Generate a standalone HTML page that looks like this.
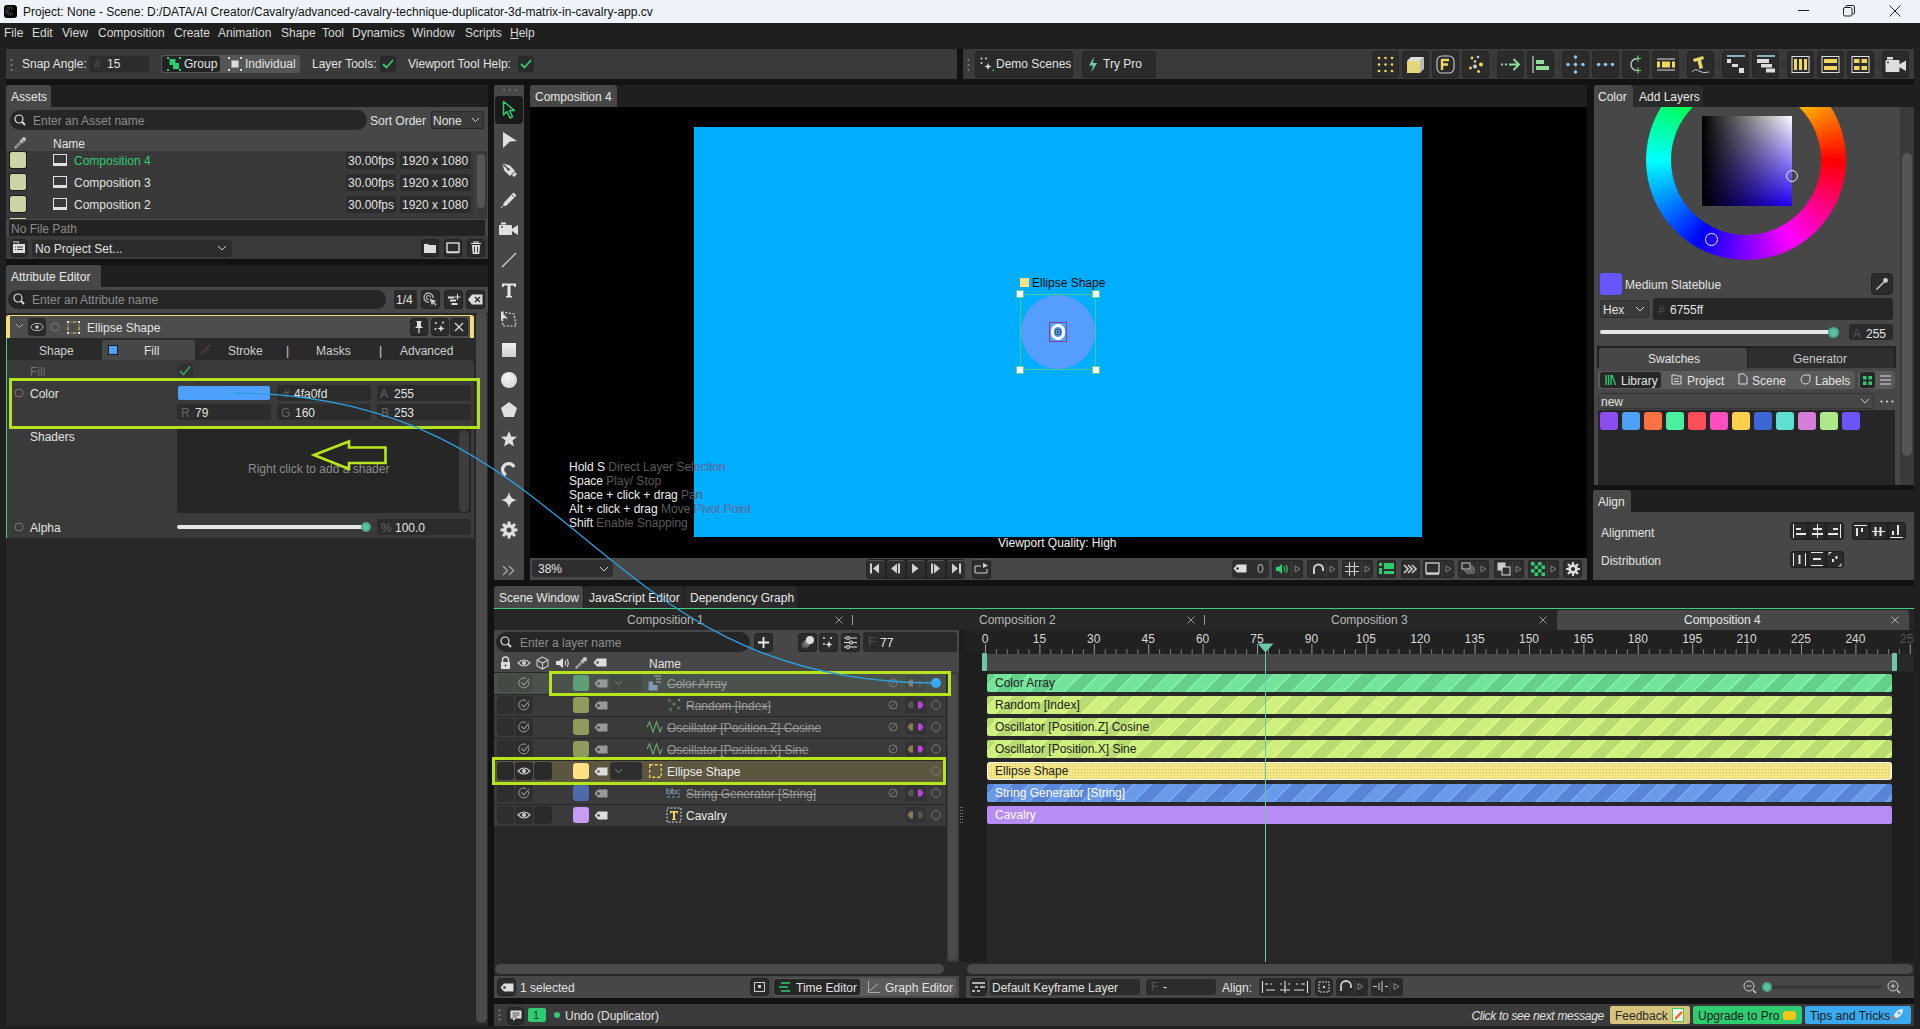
<!DOCTYPE html>
<html><head><meta charset="utf-8">
<style>
*{box-sizing:border-box;margin:0;padding:0}
html,body{width:1920px;height:1029px;overflow:hidden;background:#1f1f1f;font-family:"Liberation Sans",sans-serif;font-size:12px;color:#e2e2e2}
.a{position:absolute}
.t{position:absolute;white-space:nowrap;line-height:16px}
.g{color:#8a8a8a}
.btn{position:absolute;background:#2b2b2b;border-radius:3px;border:1px solid #222}
.inp{position:absolute;background:#262626;border-radius:3px}
svg{position:absolute;overflow:visible}
</style></head><body>

<!-- TITLE BAR -->
<div class="a" style="left:0;top:0;width:1920px;height:23px;background:#eef3f9"></div>
<div class="a" style="left:3.5px;top:4.5px;width:13px;height:13px;background:#000;border-radius:3px"></div>
<svg style="left:5px;top:6px" width="10" height="10" viewBox="0 0 10 10"><path d="M8.2 2.8 A4 4 0 1 0 8.2 7.2" fill="none" stroke="#888" stroke-width="1" stroke-dasharray="1.2 0.8"/><path d="M6.8 3.8 A2.2 2.2 0 1 0 6.8 6.2" fill="none" stroke="#999" stroke-width="1" stroke-dasharray="1 0.8"/></svg>
<div class="t" style="left:23px;top:4px;color:#111">Project: None - Scene: D:/DATA/AI Creator/Cavalry/advanced-cavalry-technique-duplicator-3d-matrix-in-cavalry-app.cv</div>

<!-- MENU BAR -->
<div class="a" style="left:0;top:23px;width:1920px;height:20px;background:#1f1f1f"></div>
<div class="t" style="left:4px;top:25px;color:#d8d8d8">File</div>
<div class="t" style="left:32px;top:25px;color:#d8d8d8">Edit</div>
<div class="t" style="left:62px;top:25px;color:#d8d8d8">View</div>
<div class="t" style="left:98px;top:25px;color:#d8d8d8">Composition</div>
<div class="t" style="left:174px;top:25px;color:#d8d8d8">Create</div>
<div class="t" style="left:218px;top:25px;color:#d8d8d8">Animation</div>
<div class="t" style="left:281px;top:25px;color:#d8d8d8">Shape</div>
<div class="t" style="left:322px;top:25px;color:#d8d8d8">Tool</div>
<div class="t" style="left:352px;top:25px;color:#d8d8d8">Dynamics</div>
<div class="t" style="left:412px;top:25px;color:#d8d8d8">Window</div>
<div class="t" style="left:465px;top:25px;color:#d8d8d8">Scripts</div>
<div class="t" style="left:510px;top:25px;color:#d8d8d8"><u>H</u>elp</div>

<div class="a" style="left:1798px;top:10px;width:11px;height:1px;background:#222"></div>
<svg style="left:1843px;top:5px" width="12" height="12" viewBox="0 0 12 12"><rect x="0.5" y="2.5" width="8.5" height="8.5" rx="1.5" fill="none" stroke="#222" stroke-width="1"/><path d="M3 2.5 V1.5 Q3 0.5 4 0.5 H10 Q11.5 0.5 11.5 2 V8 Q11.5 9 10.5 9 H9" fill="none" stroke="#222" stroke-width="1"/></svg>
<svg style="left:1889px;top:5px" width="12" height="12" viewBox="0 0 12 12"><path d="M0.5 0.5 L11.5 11.5 M11.5 0.5 L0.5 11.5" stroke="#222" stroke-width="1"/></svg>


<div class="a" style="left:6px;top:79px;width:1908px;height:947px;background:#121212"></div>
<!-- TOOLBARS -->
<div class="a" style="left:957px;top:49px;width:6px;height:30px;background:#121212"></div>
<div class="a" style="left:6px;top:49px;width:951px;height:30px;background:#3a3a3a"></div>
<div class="a" style="left:963px;top:49px;width:951px;height:30px;background:#3a3a3a"></div>

<svg style="left:10px;top:58px" width="3" height="14" viewBox="0 0 3 14"><circle cx="1.5" cy="2" r="1" fill="#888"/><circle cx="1.5" cy="7" r="1" fill="#888"/><circle cx="1.5" cy="12" r="1" fill="#888"/></svg>
<div class="t" style="left:22px;top:56px">Snap Angle:</div>
<div class="a" style="left:89px;top:56px;width:60px;height:16px;background:#2c2c2c;border-radius:2px"></div>
<div class="t" style="left:94px;top:56px;color:#555">#</div>
<div class="t" style="left:107px;top:56px">15</div>
<div class="a" style="left:161px;top:55px;width:139px;height:18px;background:#555;border-radius:3px"></div>
<div class="a" style="left:162px;top:56px;width:58px;height:16px;background:#232323;border-radius:3px"></div>
<svg style="left:167px;top:57px" width="14" height="14" viewBox="0 0 14 14"><g fill="#2ecc71"><rect x="0" y="0" width="2" height="2"/><rect x="12" y="0" width="2" height="2"/><rect x="0" y="12" width="2" height="2"/><rect x="12" y="12" width="2" height="2"/><rect x="2.5" y="2" width="6" height="6"/><rect x="6" y="6" width="6" height="6"/></g></svg>
<div class="t" style="left:184px;top:56px">Group</div>
<svg style="left:228px;top:57px" width="14" height="14" viewBox="0 0 14 14"><g fill="#ddd"><rect x="0" y="0" width="2" height="2"/><rect x="12" y="0" width="2" height="2"/><rect x="0" y="12" width="2" height="2"/><rect x="12" y="12" width="2" height="2"/><rect x="3.5" y="3.5" width="7" height="7"/></g></svg>
<div class="t" style="left:245px;top:56px">Individual</div>
<div class="t" style="left:312px;top:56px">Layer Tools:</div>
<div class="a" style="left:380px;top:56px;width:16px;height:16px;background:#2a2a2a;border-radius:2px"></div>
<svg style="left:382px;top:59px" width="12" height="10" viewBox="0 0 12 10"><path d="M1 5 L4.5 8.5 L11 1" fill="none" stroke="#2ecc71" stroke-width="1.8"/></svg>
<div class="t" style="left:408px;top:56px">Viewport Tool Help:</div>
<div class="a" style="left:518px;top:56px;width:16px;height:16px;background:#2a2a2a;border-radius:2px"></div>
<svg style="left:520px;top:59px" width="12" height="10" viewBox="0 0 12 10"><path d="M1 5 L4.5 8.5 L11 1" fill="none" stroke="#2ecc71" stroke-width="1.8"/></svg>

<svg style="left:967px;top:58px" width="3" height="14" viewBox="0 0 3 14"><circle cx="1.5" cy="2" r="1" fill="#888"/><circle cx="1.5" cy="7" r="1" fill="#888"/><circle cx="1.5" cy="12" r="1" fill="#888"/></svg>
<div class="a" style="left:975px;top:51px;width:98px;height:27px;background:#2b2b2b;border-radius:4px;box-shadow:inset 0 0 0 1px #262626"></div>

<svg style="left:980px;top:57px" width="14" height="14" viewBox="0 0 14 14"><g fill="#ddd"><circle cx="1.5" cy="1.5" r="1"/><circle cx="6" cy="1.5" r="1"/><circle cx="1.5" cy="6" r="1"/><path d="M8 6 l1 2.5 2.5 1 -2.5 1 -1 2.5 -1 -2.5 -2.5 -1 2.5 -1z"/></g><path d="M12 14 l2 -2 v2z" fill="#5fcf9a"/></svg>
<div class="t" style="left:996px;top:56px">Demo Scenes</div>
<div class="a" style="left:1077px;top:63px;width:2px;height:2px;background:#222;border-radius:1px"></div>
<div class="a" style="left:1082px;top:51px;width:74px;height:27px;background:#2b2b2b;border-radius:4px;box-shadow:inset 0 0 0 1px #262626"></div>

<svg style="left:1088px;top:57px" width="10" height="15" viewBox="0 0 10 15"><path d="M6 0 L1 8.5 H5 L3.5 15 L9 6 H5z" fill="#6fcfa4"/></svg>
<div class="t" style="left:1103px;top:56px">Try Pro</div>
<div class="a" style="left:1372px;top:51px;width:27px;height:27px;background:#2b2b2b;border-radius:4px;box-shadow:inset 0 0 0 1px #262626"></div>
<div class="a" style="left:1402px;top:51px;width:27px;height:27px;background:#2b2b2b;border-radius:4px;box-shadow:inset 0 0 0 1px #262626"></div>
<div class="a" style="left:1432px;top:51px;width:27px;height:27px;background:#2b2b2b;border-radius:4px;box-shadow:inset 0 0 0 1px #262626"></div>
<div class="a" style="left:1462px;top:51px;width:27px;height:27px;background:#2b2b2b;border-radius:4px;box-shadow:inset 0 0 0 1px #262626"></div>
<div class="a" style="left:1497px;top:51px;width:27px;height:27px;background:#2b2b2b;border-radius:4px;box-shadow:inset 0 0 0 1px #262626"></div>
<div class="a" style="left:1527px;top:51px;width:27px;height:27px;background:#2b2b2b;border-radius:4px;box-shadow:inset 0 0 0 1px #262626"></div>
<div class="a" style="left:1562px;top:51px;width:27px;height:27px;background:#2b2b2b;border-radius:4px;box-shadow:inset 0 0 0 1px #262626"></div>
<div class="a" style="left:1592px;top:51px;width:27px;height:27px;background:#2b2b2b;border-radius:4px;box-shadow:inset 0 0 0 1px #262626"></div>
<div class="a" style="left:1622px;top:51px;width:27px;height:27px;background:#2b2b2b;border-radius:4px;box-shadow:inset 0 0 0 1px #262626"></div>
<div class="a" style="left:1652px;top:51px;width:27px;height:27px;background:#2b2b2b;border-radius:4px;box-shadow:inset 0 0 0 1px #262626"></div>
<div class="a" style="left:1687px;top:51px;width:27px;height:27px;background:#2b2b2b;border-radius:4px;box-shadow:inset 0 0 0 1px #262626"></div>
<div class="a" style="left:1722px;top:51px;width:27px;height:27px;background:#2b2b2b;border-radius:4px;box-shadow:inset 0 0 0 1px #262626"></div>
<div class="a" style="left:1752px;top:51px;width:27px;height:27px;background:#2b2b2b;border-radius:4px;box-shadow:inset 0 0 0 1px #262626"></div>
<div class="a" style="left:1787px;top:51px;width:27px;height:27px;background:#2b2b2b;border-radius:4px;box-shadow:inset 0 0 0 1px #262626"></div>
<div class="a" style="left:1817px;top:51px;width:27px;height:27px;background:#2b2b2b;border-radius:4px;box-shadow:inset 0 0 0 1px #262626"></div>
<div class="a" style="left:1847px;top:51px;width:27px;height:27px;background:#2b2b2b;border-radius:4px;box-shadow:inset 0 0 0 1px #262626"></div>
<div class="a" style="left:1882px;top:51px;width:27px;height:27px;background:#2b2b2b;border-radius:4px;box-shadow:inset 0 0 0 1px #262626"></div>
<div class="a" style="left:1493px;top:63px;width:2px;height:2px;background:#222;border-radius:1px"></div>
<div class="a" style="left:1558px;top:63px;width:2px;height:2px;background:#222;border-radius:1px"></div>
<div class="a" style="left:1683px;top:63px;width:2px;height:2px;background:#222;border-radius:1px"></div>
<div class="a" style="left:1718px;top:63px;width:2px;height:2px;background:#222;border-radius:1px"></div>
<div class="a" style="left:1783px;top:63px;width:2px;height:2px;background:#222;border-radius:1px"></div>
<div class="a" style="left:1878px;top:63px;width:2px;height:2px;background:#222;border-radius:1px"></div>

<svg style="left:1377px;top:56px" width="17" height="17" viewBox="0 0 17 17"><g fill="#f0d860"><circle cx="2" cy="2" r="1.3"/><circle cx="8.5" cy="2" r="1.3"/><circle cx="15" cy="2" r="1.3"/><circle cx="2" cy="8.5" r="1.3"/><circle cx="8.5" cy="8.5" r="1.3"/><circle cx="15" cy="8.5" r="1.3"/><circle cx="2" cy="15" r="1.3"/><circle cx="8.5" cy="15" r="1.3"/><circle cx="15" cy="15" r="1.3"/></g></svg>
<svg style="left:1406px;top:55px" width="19" height="19" viewBox="0 0 19 19"><path d="M1 6 L5 2 H18 L14 6z" fill="#ddd"/><path d="M14 6 L18 2 V14 L14 18z" fill="#bbb"/><rect x="1" y="6" width="13" height="12" fill="#e3d678"/></svg>
<svg style="left:1436px;top:55px" width="19" height="19" viewBox="0 0 19 19"><rect x="1" y="1" width="17" height="17" rx="5" fill="none" stroke="#ccc" stroke-width="1.1"/><path d="M6 4 V15 M6 5 H13 M6 9.5 H12" stroke="#f0d860" stroke-width="2.4"/></svg>
<svg style="left:1466px;top:55px" width="19" height="19" viewBox="0 0 19 19"><g fill="#f0d860"><circle cx="6" cy="3" r="1.4"/><circle cx="15" cy="9.5" r="2"/><circle cx="4.5" cy="13" r="1.4"/><circle cx="12.5" cy="16.5" r="1.4"/></g><g fill="#ccc"><circle cx="12" cy="2" r="1.3"/><circle cx="9" cy="6.5" r="1.3"/><circle cx="9" cy="11.5" r="2"/></g></svg>
<svg style="left:1500px;top:57px" width="21" height="15" viewBox="0 0 21 15"><path d="M1 7.5 H3 M5 7.5 H7 M9 7.5 H19 M13.5 2 L19 7.5 L13.5 13" fill="none" stroke="#8fde9b" stroke-width="1.8"/></svg>
<svg style="left:1531px;top:55px" width="19" height="19" viewBox="0 0 19 19"><path d="M2 1 V18" stroke="#ccc" stroke-width="1.2"/><rect x="5" y="5" width="8" height="4" fill="#8fde9b"/><rect x="5" y="11" width="13" height="4" fill="#8fde9b"/></svg>
<svg style="left:1566px;top:55px" width="19" height="19" viewBox="0 0 19 19"><path d="M9.5 2 V17 M2 9.5 H17" stroke="#3a3a3a" stroke-width="2"/><g fill="#8cc6f5"><circle cx="9.5" cy="2" r="1.7"/><circle cx="9.5" cy="9.5" r="1.7"/><circle cx="9.5" cy="17" r="1.7"/><circle cx="2" cy="9.5" r="1.7"/><circle cx="17" cy="9.5" r="1.7"/></g></svg>
<svg style="left:1596px;top:60px" width="19" height="9" viewBox="0 0 19 9"><path d="M2 4.5 H17" stroke="#3a3a3a" stroke-width="2"/><g fill="#8cc6f5"><circle cx="2.5" cy="4.5" r="1.7"/><circle cx="9.5" cy="4.5" r="1.7"/><circle cx="16.5" cy="4.5" r="1.7"/></g></svg>
<svg style="left:1629px;top:55px" width="14" height="19" viewBox="0 0 14 19"><path d="M8 3.5 A6 6 0 0 0 8 15.5" fill="none" stroke="#ccc" stroke-width="1.3"/><path d="M9 0.5 V6.5 M6 3.5 H12 M9 12.5 V18.5 M6 15.5 H12" stroke="#6fcf80" stroke-width="1.2"/></svg>
<svg style="left:1656px;top:58px" width="20" height="13" viewBox="0 0 20 13"><path d="M1 1 H19 M1 12 H19" stroke="#ddd" stroke-width="1"/><rect x="1" y="3.5" width="3" height="6" fill="#f0d860"/><rect x="6" y="3.5" width="8" height="6" fill="#f0d860"/><rect x="16" y="3.5" width="3" height="6" fill="#f0d860"/></svg>
<svg style="left:1691px;top:54px" width="21" height="21" viewBox="0 0 21 21"><path d="M2 5 L12 2 L13 5 L10 6 L12 14 L8.5 15 L6.5 7 L3 8z" fill="#e6d56a"/><path d="M1 18 Q4 14 8 17 T18 18" fill="none" stroke="#ccc" stroke-width="1"/></svg>
<svg style="left:1726px;top:55px" width="20" height="19" viewBox="0 0 20 19"><path d="M1 1 H19" stroke="#a8dcf5" stroke-width="1.5"/><g fill="#ddd"><rect x="1" y="4" width="4" height="4"/><rect x="6" y="9" width="6" height="3"/><rect x="13" y="13" width="5" height="5"/></g></svg>
<svg style="left:1756px;top:55px" width="20" height="19" viewBox="0 0 20 19"><path d="M1 1 H19" stroke="#a8dcf5" stroke-width="1.5"/><g fill="#ddd"><rect x="1" y="4" width="12" height="4"/><rect x="5" y="9" width="11" height="3.5"/><rect x="10" y="13.5" width="9" height="4"/></g></svg>
<svg style="left:1791px;top:55px" width="19" height="19" viewBox="0 0 19 19"><rect x="1" y="1.5" width="17" height="16" fill="none" stroke="#ddd" stroke-width="1"/><g fill="#f0d860"><rect x="3" y="4" width="3" height="11"/><rect x="8" y="4" width="3" height="11"/><rect x="13" y="4" width="3" height="11"/></g></svg>
<svg style="left:1821px;top:55px" width="19" height="19" viewBox="0 0 19 19"><rect x="1" y="1.5" width="17" height="16" fill="none" stroke="#ddd" stroke-width="1"/><g fill="#f0d860"><rect x="3" y="4" width="13" height="4"/><rect x="3" y="11" width="13" height="4"/></g></svg>
<svg style="left:1851px;top:55px" width="19" height="19" viewBox="0 0 19 19"><rect x="1" y="1.5" width="17" height="16" fill="none" stroke="#ddd" stroke-width="1"/><g fill="#f0d860"><rect x="3" y="4" width="5.5" height="4"/><rect x="10.5" y="4" width="5.5" height="4"/><rect x="3" y="11" width="5.5" height="4"/><rect x="10.5" y="11" width="5.5" height="4"/></g></svg>
<svg style="left:1885px;top:56px" width="22" height="17" viewBox="0 0 22 17"><rect x="0.5" y="4" width="14" height="12" rx="1" fill="#ddd"/><path d="M14 8.5 L21 4.5 V15 L14 11z" fill="#ddd"/><rect x="2" y="1" width="6" height="2.5" fill="#ddd"/><circle cx="3" cy="6.5" r="1" fill="#444"/></svg>


<!-- LEFT PANEL: ASSETS -->
<div class="a" style="left:6px;top:85px;width:482px;height:22px;background:#1f1f1f"></div>
<div class="a" style="left:6px;top:85px;width:45px;height:22px;background:#474747;border-radius:3px 3px 0 0"></div>
<div class="a" style="left:6px;top:107px;width:482px;height:152px;background:#474747"></div>

<!-- LEFT PANEL: ATTRIBUTE EDITOR -->
<div class="a" style="left:6px;top:265px;width:482px;height:22px;background:#1f1f1f"></div>
<div class="a" style="left:6px;top:265px;width:95px;height:22px;background:#474747;border-radius:3px 3px 0 0"></div>
<div class="a" style="left:6px;top:287px;width:482px;height:739px;background:#282828"></div>
<div class="a" style="left:6px;top:287px;width:482px;height:26px;background:#474747"></div>


<!-- ASSETS CONTENT -->
<div class="t" style="left:11px;top:89px;color:#e8e8e8">Assets</div>
<div class="a" style="left:10px;top:110px;width:357px;height:20px;background:#262626;border-radius:10px"></div>
<svg style="left:14px;top:114px" width="12" height="12" viewBox="0 0 12 12"><circle cx="5" cy="5" r="4" fill="none" stroke="#ddd" stroke-width="1.2"/><path d="M8 8 L11 11" stroke="#ddd" stroke-width="1.8"/></svg>
<div class="t g" style="left:33px;top:113px;color:#8d8d8d">Enter an Asset name</div>
<div class="t" style="left:370px;top:113px">Sort Order</div>
<div class="a" style="left:431px;top:111px;width:53px;height:18px;background:#3a3a3a;border:1px solid #2a2a2a;border-radius:2px"></div>
<div class="t" style="left:433px;top:113px">None</div>
<svg style="left:471px;top:117px" width="9" height="6" viewBox="0 0 9 6"><path d="M1 1 L4.5 4.5 L8 1" fill="none" stroke="#ccc" stroke-width="1"/></svg>
<svg style="left:14px;top:136px" width="13" height="13" viewBox="0 0 13 13"><path d="M1.5 11.5 L7.5 5.5" stroke="#bbbbbb" stroke-width="2.2" stroke-linecap="round"/><path d="M1.8 11.2 L7.2 5.8" stroke="#474747" stroke-width="0.8"/><path d="M6 4 L9 7" stroke="#bbbbbb" stroke-width="1.6"/><circle cx="9.8" cy="3.2" r="2.2" fill="#bbbbbb"/></svg>
<div class="t" style="left:53px;top:136px">Name</div>
<div class="a" style="left:6px;top:151px;width:469px;height:68px;background:#393939"></div>
<div class="a" style="left:476px;top:151px;width:11px;height:68px;background:#393939"></div>
<div class="a" style="left:477px;top:154px;width:8px;height:54px;background:#555;border-radius:4px"></div>
<div class="a" style="left:10px;top:152px;width:16px;height:16px;background:#cdd3a4;border-radius:2px;box-shadow:0 0 0 1px #1e1e1e"></div>
<div class="a" style="left:53px;top:154px;width:14px;height:12px;border:1.5px solid #e0e0e0;border-bottom-width:3px"></div>
<div class="t" style="left:74px;top:153px;color:#2ecc71">Composition 4</div>
<div class="a" style="left:346px;top:152px;width:50px;height:17px;background:#2c2c2c;border-radius:2px"></div>
<div class="t" style="left:348px;top:153px">30.00fps</div>
<div class="a" style="left:400px;top:152px;width:71px;height:17px;background:#2c2c2c;border-radius:2px"></div>
<div class="t" style="left:402px;top:153px">1920 x 1080</div>
<div class="a" style="left:10px;top:174px;width:16px;height:16px;background:#cdd3a4;border-radius:2px;box-shadow:0 0 0 1px #1e1e1e"></div>
<div class="a" style="left:53px;top:176px;width:14px;height:12px;border:1.5px solid #e0e0e0;border-bottom-width:3px"></div>
<div class="t" style="left:74px;top:175px;color:#e2e2e2">Composition 3</div>
<div class="a" style="left:346px;top:174px;width:50px;height:17px;background:#2c2c2c;border-radius:2px"></div>
<div class="t" style="left:348px;top:175px">30.00fps</div>
<div class="a" style="left:400px;top:174px;width:71px;height:17px;background:#2c2c2c;border-radius:2px"></div>
<div class="t" style="left:402px;top:175px">1920 x 1080</div>
<div class="a" style="left:10px;top:196px;width:16px;height:16px;background:#cdd3a4;border-radius:2px;box-shadow:0 0 0 1px #1e1e1e"></div>
<div class="a" style="left:53px;top:198px;width:14px;height:12px;border:1.5px solid #e0e0e0;border-bottom-width:3px"></div>
<div class="t" style="left:74px;top:197px;color:#e2e2e2">Composition 2</div>
<div class="a" style="left:346px;top:196px;width:50px;height:17px;background:#2c2c2c;border-radius:2px"></div>
<div class="t" style="left:348px;top:197px">30.00fps</div>
<div class="a" style="left:400px;top:196px;width:71px;height:17px;background:#2c2c2c;border-radius:2px"></div>
<div class="t" style="left:402px;top:197px">1920 x 1080</div>

<div class="a" style="left:10px;top:218px;width:16px;height:1px;background:#cdd3a4"></div>
<div class="a" style="left:9px;top:220px;width:476px;height:16px;background:#232323"></div>
<div class="t" style="left:11px;top:221px;color:#8a8a8a">No File Path</div>
<div class="a" style="left:6px;top:236px;width:482px;height:23px;background:#3a3a3a"></div>
<div class="btn" style="left:10px;top:239px;width:18px;height:18px;border-radius:4px"></div>
<svg style="left:12px;top:241px" width="14" height="13" viewBox="0 0 14 13"><path d="M1 1 h5 l1 1 h0" stroke="#ddd" stroke-width="1.2" fill="none"/><rect x="1" y="3" width="12" height="9" fill="#ddd"/><path d="M3 6h1M5 6h6M3 8.5h1M5 8.5h6" stroke="#333" stroke-width="1"/></svg>
<div class="a" style="left:32px;top:240px;width:200px;height:17px;background:#2c2c2c;border-radius:2px"></div>
<div class="t" style="left:35px;top:241px">No Project Set...</div>
<svg style="left:217px;top:245px" width="10" height="6" viewBox="0 0 10 6"><path d="M1 1 L5 5 L9 1" fill="none" stroke="#ccc" stroke-width="1"/></svg>
<div class="btn" style="left:421px;top:239px;width:18px;height:18px"></div>
<svg style="left:424px;top:243px" width="12" height="10" viewBox="0 0 12 10"><path d="M0 1 h4 l1 1 h7 v8 h-12z" fill="#ddd"/></svg>
<div class="btn" style="left:444px;top:239px;width:18px;height:18px"></div>
<svg style="left:446px;top:242px" width="14" height="12" viewBox="0 0 14 12"><rect x="1" y="1" width="12" height="9" fill="none" stroke="#ddd" stroke-width="1.4"/><path d="M1 10.5h12" stroke="#ddd" stroke-width="1.5"/></svg>
<div class="btn" style="left:467px;top:239px;width:18px;height:18px"></div>
<svg style="left:470px;top:241px" width="12" height="14" viewBox="0 0 12 14"><path d="M1 2.5h10M4 2.5V1h4v1.5" stroke="#ddd" stroke-width="1.2" fill="none"/><path d="M2 4h8l-.7 9h-6.6z" fill="#ddd"/><path d="M4.5 5.5v6M7.5 5.5v6" stroke="#333" stroke-width="1"/></svg>

<!-- ATTRIBUTE EDITOR CONTENT -->
<div class="t" style="left:11px;top:269px;color:#e8e8e8">Attribute Editor</div>
<div class="a" style="left:8px;top:290px;width:378px;height:19px;background:#262626;border-radius:10px"></div>
<svg style="left:13px;top:293px" width="12" height="12" viewBox="0 0 12 12"><circle cx="5" cy="5" r="4" fill="none" stroke="#ddd" stroke-width="1.2"/><path d="M8 8 L11 11" stroke="#ddd" stroke-width="1.8"/></svg>
<div class="t" style="left:32px;top:292px;color:#8d8d8d">Enter an Attribute name</div>
<div class="a" style="left:394px;top:290px;width:23px;height:19px;background:#2a2a2a;border-radius:2px"></div>
<div class="t" style="left:396px;top:292px">1/4</div>
<div class="btn" style="left:421px;top:290px;width:19px;height:19px"></div>
<svg style="left:423px;top:292px" width="15" height="15" viewBox="0 0 15 15"><path d="M10 6 A4.5 4.5 0 1 0 6 10" fill="none" stroke="#bbb" stroke-width="1.3"/><path d="M7.5 5.5 A2 2 0 1 0 5.5 7.5" fill="none" stroke="#bbb" stroke-width="1.1"/><path d="M6.5 6.5 L13.5 9 L11 10 L13.5 12.5 L12.5 13.5 L10 11 L9 13.5z" fill="#ccc"/></svg>
<div class="btn" style="left:444px;top:290px;width:19px;height:19px"></div>
<svg style="left:446px;top:293px" width="15" height="13" viewBox="0 0 15 13"><path d="M2 4.5h6M4 7.5h6M5.5 11h6" stroke="#ddd" stroke-width="1.8"/><path d="M11.5 1v6M8.5 4h6" stroke="#ddd" stroke-width="1.1"/></svg>
<div class="btn" style="left:466px;top:290px;width:19px;height:19px"></div>
<svg style="left:468px;top:294px" width="15" height="11" viewBox="0 0 15 11"><path d="M4 0.5h10.5v10H4L0 5.5z" fill="#ddd"/><path d="M7 3l5 5M12 3l-5 5" stroke="#333" stroke-width="1.5"/></svg>

<!-- Ellipse Shape header -->
<div class="a" style="left:6px;top:315px;width:468px;height:23px;background:#4d4d4d;border:1.5px solid #f0dc78;border-right-width:4px;border-left-width:4px;border-bottom:none;border-radius:3px 3px 0 0"></div>
<svg style="left:15px;top:323px" width="9" height="6" viewBox="0 0 9 6"><path d="M1 1 L4.5 4.5 L8 1" fill="none" stroke="#aaa" stroke-width="1"/></svg>
<div class="a" style="left:28px;top:318px;width:18px;height:18px;background:#2a2a2a;border-radius:3px"></div>
<svg style="left:30px;top:322px" width="14" height="10" viewBox="0 0 14 10"><ellipse cx="7" cy="5" rx="6" ry="3.6" fill="none" stroke="#c8c8c8" stroke-width="0.9"/><circle cx="7" cy="5" r="1.8" fill="#c8c8c8"/></svg>
<svg style="left:50px;top:322px" width="10" height="10" viewBox="0 0 10 10"><circle cx="5" cy="5" r="4" fill="none" stroke="#777" stroke-width="1"/></svg>
<svg style="left:67px;top:321px" width="13" height="13" viewBox="0 0 13 13"><path d="M3.5 1H9.5M3.5 12H9.5M1 3.5V9.5M12 3.5V9.5" stroke="#f0d860" stroke-width="1" stroke-dasharray="1 1.2 4 1.2"/><g fill="#e8e8e8"><rect x="0" y="0" width="2" height="2"/><rect x="11" y="0" width="2" height="2"/><rect x="0" y="11" width="2" height="2"/><rect x="11" y="11" width="2" height="2"/></g></svg>
<div class="t" style="left:87px;top:320px">Ellipse Shape</div>
<div class="btn" style="left:410px;top:318px;width:18px;height:18px"></div>
<svg style="left:414px;top:321px" width="10" height="12" viewBox="0 0 10 12"><path d="M2 0h6l-1 1v4l2 2H1l2-2V1z" fill="#ddd"/><path d="M5 7v5" stroke="#ddd" stroke-width="1.2"/></svg>
<div class="btn" style="left:431px;top:318px;width:18px;height:18px"></div>
<svg style="left:434px;top:321px" width="12" height="12" viewBox="0 0 12 12"><circle cx="2" cy="2" r="1" fill="#ddd"/><circle cx="9" cy="1.5" r="1" fill="#ddd"/><circle cx="1.5" cy="8" r="1" fill="#ddd"/><path d="M7 4 l1 2.5 2.5 1 -2.5 1 -1 2.5 -1 -2.5 -2.5 -1 2.5 -1z" fill="#ddd"/></svg>
<div class="btn" style="left:450px;top:318px;width:18px;height:18px"></div>
<svg style="left:454px;top:322px" width="10" height="10" viewBox="0 0 10 10"><path d="M1 1L9 9M9 1L1 9" stroke="#ddd" stroke-width="1.2"/></svg>

<!-- tabs -->
<div class="a" style="left:7px;top:338px;width:469px;height:22px;background:#2a2a2a"></div>
<div class="a" style="left:102px;top:340px;width:93px;height:20px;background:#474747;border-radius:3px 3px 0 0"></div>
<div class="t" style="left:39px;top:343px;color:#cfcfcf">Shape</div>
<div class="a" style="left:108px;top:345px;width:10px;height:10px;background:#4fa0fd;border:1px solid #1d1d1d"></div>
<div class="t" style="left:144px;top:343px">Fill</div>
<div class="a" style="left:200px;top:344px;width:11px;height:11px;background:#2e2e2e"></div>
<svg style="left:200px;top:344px" width="11" height="11" viewBox="0 0 11 11"><path d="M1 10L10 1" stroke="#8a3b3b" stroke-width="1"/></svg>
<div class="t" style="left:228px;top:343px;color:#cfcfcf">Stroke</div>
<div class="t" style="left:286px;top:343px;color:#cfcfcf">|</div>
<div class="t" style="left:316px;top:343px;color:#cfcfcf">Masks</div>
<div class="t" style="left:379px;top:343px;color:#cfcfcf">|</div>
<div class="t" style="left:400px;top:343px;color:#cfcfcf">Advanced</div>

<!-- content -->
<div class="a" style="left:7px;top:360px;width:467px;height:178px;background:#3a3a3a;border-radius:0 4px 0 0"></div>
<div class="a" style="left:6px;top:338px;width:1px;height:200px;background:#3ecf7a"></div>
<div class="t" style="left:30px;top:364px;color:#707070">Fill</div>
<div class="a" style="left:177px;top:363px;width:16px;height:15px;background:#333;border-radius:2px"></div>
<svg style="left:179px;top:365px" width="12" height="11" viewBox="0 0 12 11"><path d="M1 6 L4.5 9.5 L11 1.5" fill="none" stroke="#2faa5f" stroke-width="1.6"/></svg>

<div class="a" style="left:9px;top:378px;width:471px;height:51px;border:3px solid #b3e31f;z-index:5"></div>
<svg style="left:14px;top:388px" width="10" height="10" viewBox="0 0 10 10"><circle cx="5" cy="5" r="4" fill="none" stroke="#777" stroke-width="1"/></svg>
<div class="t" style="left:30px;top:386px">Color</div>
<div class="a" style="left:178px;top:386px;width:92px;height:14px;background:#4fa0fd;border-radius:2px"></div>
<div class="inp" style="left:277px;top:385px;width:94px;height:16px;background:#2c2c2c"></div>
<div class="t" style="left:283px;top:386px;color:#666">#</div>
<div class="t" style="left:294px;top:386px">4fa0fd</div>
<div class="inp" style="left:377px;top:385px;width:94px;height:16px;background:#2c2c2c"></div>
<div class="t" style="left:380px;top:386px;color:#666">A</div>
<div class="t" style="left:394px;top:386px">255</div>
<div class="inp" style="left:177px;top:404px;width:94px;height:16px;background:#2c2c2c"></div>
<div class="t" style="left:181px;top:405px;color:#666">R</div>
<div class="t" style="left:195px;top:405px">79</div>
<div class="inp" style="left:277px;top:404px;width:94px;height:16px;background:#2c2c2c"></div>
<div class="t" style="left:281px;top:405px;color:#666">G</div>
<div class="t" style="left:295px;top:405px">160</div>
<div class="inp" style="left:377px;top:404px;width:94px;height:16px;background:#2c2c2c"></div>
<div class="t" style="left:381px;top:405px;color:#666">B</div>
<div class="t" style="left:394px;top:405px">253</div>

<div class="t" style="left:30px;top:429px">Shaders</div>
<div class="a" style="left:177px;top:428px;width:294px;height:85px;background:#262626;border-radius:0 0 3px 3px"></div>
<div class="a" style="left:459px;top:430px;width:10px;height:82px;background:#3d3d3d;border-radius:5px"></div>
<div class="t" style="left:248px;top:461px;color:#8c8c8c">Right click to add a shader</div>
<svg style="left:310px;top:438px" width="80" height="36" viewBox="0 0 80 36"><path d="M4 17 L39 3.5 L39 9.5 L75.5 9.5 L75.5 25 L39 25 L39 31z" fill="none" stroke="#b9e61a" stroke-width="2.6"/></svg>

<svg style="left:14px;top:522px" width="10" height="10" viewBox="0 0 10 10"><circle cx="5" cy="5" r="4" fill="none" stroke="#777" stroke-width="1"/></svg>
<div class="t" style="left:30px;top:520px">Alpha</div>
<div class="a" style="left:177px;top:525px;width:190px;height:4px;background:#e6e6e6;border-radius:2px"></div>
<div class="a" style="left:361px;top:522px;width:10px;height:10px;background:#5fbfa3;border-radius:50%;border:2px solid #49a88a"></div>
<div class="inp" style="left:377px;top:519px;width:94px;height:16px;background:#2c2c2c"></div>
<div class="t" style="left:381px;top:520px;color:#666">%</div>
<div class="t" style="left:395px;top:520px">100.0</div>

<div class="a" style="left:476px;top:312px;width:11px;height:711px;background:#4a4a4a;border-radius:5px"></div>

<!-- TOOL COLUMN -->
<div class="a" style="left:494px;top:85px;width:30px;height:495px;background:#474747"></div>


<!-- TOOL COLUMN CONTENT -->
<svg style="left:500px;top:88px" width="20" height="4" viewBox="0 0 20 4"><circle cx="4" cy="2" r="0.8" fill="#999"/><circle cx="10" cy="2" r="0.8" fill="#999"/><circle cx="16" cy="2" r="0.8" fill="#999"/></svg>
<div class="a" style="left:495px;top:96px;width:28px;height:28px;background:#1a1a1a;border-radius:4px"></div>
<svg style="left:502px;top:100px" width="16" height="20" viewBox="0 0 16 20"><path d="M1.5 1.5 L1.5 15 L5 11.5 L8 18 L10.5 16.8 L7.5 10.5 L12.5 10.5z" fill="none" stroke="#2ecc71" stroke-width="1.5" stroke-linejoin="round"/></svg>
<svg style="left:502px;top:131px" width="16" height="18" viewBox="0 0 16 18"><path d="M1 1 L15 10 L8 10.5 L1 17z" fill="#e0e0e0"/></svg>
<svg style="left:500px;top:161px" width="18" height="18" viewBox="0 0 18 18"><path d="M2 2 L10 4.5 L15 10 L10 15 L4.5 10z" fill="#ddd"/><path d="M2 2 L8 8" stroke="#444" stroke-width="1.2"/><circle cx="8.5" cy="8.5" r="1.3" fill="#444"/><path d="M12 14 l3 -3 2 2 -3 3z" fill="#ddd"/></svg>
<svg style="left:500px;top:191px" width="18" height="18" viewBox="0 0 18 18"><path d="M13.5 1.5 l3 3 -10 10 -3.5 0.8 0.8 -3.5z" fill="#ddd"/><path d="M11.5 3.5 l3 3" stroke="#555" stroke-width="1"/><path d="M1 17 l1.5 -2" stroke="#ddd" stroke-width="1"/></svg>
<svg style="left:499px;top:222px" width="20" height="14" viewBox="0 0 20 14"><rect x="0" y="3" width="13" height="10" rx="1" fill="#e0e0e0"/><path d="M13 7 L19 3 L19 13 L13 9z" fill="#e0e0e0"/><circle cx="3" cy="5" r="1" fill="#555"/><rect x="2" y="0.5" width="5" height="2" fill="#e0e0e0"/></svg>
<svg style="left:500px;top:251px" width="18" height="18" viewBox="0 0 18 18"><path d="M2 16 L16 2" stroke="#ddd" stroke-width="1.2"/></svg>
<svg style="left:501px;top:282px" width="16" height="16" viewBox="0 0 16 16"><path d="M1 1.5 H15 V5 H13.5 L13 3.5 H9.5 V14 H11 V15.5 H5 V14 H6.5 V3.5 H3 L2.5 5 H1z" fill="#e6e6e6"/></svg>
<svg style="left:500px;top:310px" width="18" height="18" viewBox="0 0 18 18"><path d="M2 2 L14 4 L16 16 L3 16z" fill="none" stroke="#ddd" stroke-width="1.2" stroke-dasharray="2 1.5"/><path d="M1 1 L1 11 L4 8 L8 9z" fill="#ddd"/></svg>
<div class="a" style="left:502px;top:343px;width:14px;height:14px;background:linear-gradient(#f0f0f0,#cfcfcf)"></div>
<div class="a" style="left:501px;top:372px;width:16px;height:16px;background:radial-gradient(circle at 40% 35%,#f5f5f5,#cfcfcf);border-radius:50%"></div>
<svg style="left:500px;top:401px" width="18" height="17" viewBox="0 0 18 17"><path d="M9 1 L17 7 L14 16 L4 16 L1 7z" fill="#e0e0e0"/></svg>
<svg style="left:500px;top:430px" width="18" height="18" viewBox="0 0 18 18"><path d="M9 1 L11.2 6.6 L17 6.8 L12.5 10.5 L14 16.5 L9 13.2 L4 16.5 L5.5 10.5 L1 6.8 L6.8 6.6z" fill="#e0e0e0"/></svg>
<svg style="left:500px;top:461px" width="18" height="18" viewBox="0 0 18 18"><path d="M14 6 A6 6 0 1 0 6 14" fill="none" stroke="#e0e0e0" stroke-width="3.2"/></svg>
<svg style="left:500px;top:491px" width="18" height="18" viewBox="0 0 18 18"><path d="M9 1 Q10 8 17 9 Q10 10 9 17 Q8 10 1 9 Q8 8 9 1z" fill="#e0e0e0"/></svg>
<svg style="left:500px;top:521px" width="18" height="18" viewBox="0 0 18 18"><g fill="#e0e0e0"><circle cx="9" cy="9" r="6"/><rect x="7.5" y="0.5" width="3" height="4"/><rect x="7.5" y="13.5" width="3" height="4"/><rect x="0.5" y="7.5" width="4" height="3"/><rect x="13.5" y="7.5" width="4" height="3"/><rect x="7.5" y="0.5" width="3" height="4" transform="rotate(45 9 9)"/><rect x="7.5" y="13.5" width="3" height="4" transform="rotate(45 9 9)"/><rect x="0.5" y="7.5" width="4" height="3" transform="rotate(45 9 9)"/><rect x="13.5" y="7.5" width="4" height="3" transform="rotate(45 9 9)"/></g><circle cx="9" cy="9" r="2.5" fill="#474747"/></svg>
<svg style="left:502px;top:565px" width="14" height="11" viewBox="0 0 14 11"><path d="M1 1 L5.5 5.5 L1 10 M7 1 L11.5 5.5 L7 10" fill="none" stroke="#aaa" stroke-width="1.2"/></svg>

<!-- VIEWPORT -->
<div class="a" style="left:530px;top:85px;width:1057px;height:22px;background:#1f1f1f"></div>
<div class="a" style="left:530px;top:85px;width:87px;height:22px;background:#474747;border-radius:3px 3px 0 0"></div>
<div class="a" style="left:530px;top:107px;width:1057px;height:451px;background:#000"></div>
<div class="a" style="left:694px;top:127px;width:728px;height:410px;background:#00aeff"></div>
<div class="a" style="left:530px;top:558px;width:1057px;height:22px;background:#474747"></div>


<!-- VIEWPORT CONTENT -->
<div class="t" style="left:535px;top:89px;color:#e8e8e8">Composition 4</div>
<!-- ellipse -->
<div class="a" style="left:1021px;top:295px;width:74px;height:74px;background:#559efd;border-radius:50%"></div>
<div class="a" style="left:1020px;top:294px;width:76px;height:76px;border:1px solid #4cc98f"></div>
<div class="a" style="left:1016px;top:290px;width:8px;height:8px;background:#fff;border:1px solid #5fcf9a"></div>
<div class="a" style="left:1092px;top:290px;width:8px;height:8px;background:#fff;border:1px solid #5fcf9a"></div>
<div class="a" style="left:1016px;top:366px;width:8px;height:8px;background:#fff;border:1px solid #5fcf9a"></div>
<div class="a" style="left:1092px;top:366px;width:8px;height:8px;background:#fff;border:1px solid #5fcf9a"></div>
<div class="a" style="left:1049px;top:322px;width:18px;height:20px;border:1px solid #7d3fa6;background:#5aa0f5"></div>
<div class="a" style="left:1051px;top:324px;width:14px;height:16px;border:3px solid #fff;border-radius:7px;background:#559efd"></div>
<svg style="left:1053px;top:327px" width="10" height="10" viewBox="0 0 10 10"><circle cx="5" cy="5" r="3" fill="none" stroke="#444" stroke-width="0.9"/><circle cx="5" cy="5" r="0.9" fill="#333"/></svg>
<div class="a" style="left:1020px;top:278px;width:9px;height:9px;background:#ffe082"></div>
<div class="t" style="left:1032px;top:275px;color:#0a0a0a;font-size:12px">Ellipse Shape</div>
<!-- help text -->
<div class="t" style="left:569px;top:459px;color:#eee">Hold S <span style="color:#5a5a5a">Direct Layer Selection</span></div>
<div class="t" style="left:569px;top:473px;color:#eee">Space <span style="color:#5a5a5a">Play/ Stop</span></div>
<div class="t" style="left:569px;top:487px;color:#eee">Space + click + drag <span style="color:#5a5a5a">Pan</span></div>
<div class="t" style="left:569px;top:501px;color:#eee">Alt + click + drag <span style="color:#5a5a5a">Move Pivot Point</span></div>
<div class="t" style="left:569px;top:515px;color:#eee">Shift <span style="color:#5a5a5a">Enable Snapping</span></div>

<div class="a" style="left:694px;top:455px;width:120px;height:80px;overflow:hidden">
<div class="t" style="left:-125px;top:4px;color:transparent">Hold S <span style="color:#4d7fc9">Direct Layer Selection</span></div>
<div class="t" style="left:-125px;top:46px;color:transparent">Alt + click + drag <span style="color:#4d7fc9">Move Pivot Point</span></div>
</div>
<div class="t" style="left:998px;top:535px;color:#f0f0f0">Viewport Quality: High</div>


<!-- VIEWPORT BOTTOM BAR -->
<div class="a" style="left:532px;top:560px;width:81px;height:17px;background:#2e2e2e;border-radius:3px"></div>
<div class="t" style="left:538px;top:561px">38%</div>
<svg style="left:599px;top:566px" width="10" height="6" viewBox="0 0 10 6"><path d="M1 1 L5 5 L9 1" fill="none" stroke="#ccc" stroke-width="1"/></svg>
<div class="a" style="left:866px;top:559px;width:99px;height:20px;background:#222;border-radius:4px"></div>
<div class="a" style="left:867px;top:560px;width:18px;height:18px;background:#2e2e2e;border-radius:3px;border-top:1px solid #555"></div>
<div class="a" style="left:887px;top:560px;width:18px;height:18px;background:#2e2e2e;border-radius:3px;border-top:1px solid #555"></div>
<div class="a" style="left:907px;top:560px;width:18px;height:18px;background:#2e2e2e;border-radius:3px;border-top:1px solid #555"></div>
<div class="a" style="left:927px;top:560px;width:18px;height:18px;background:#2e2e2e;border-radius:3px;border-top:1px solid #555"></div>
<div class="a" style="left:947px;top:560px;width:18px;height:18px;background:#2e2e2e;border-radius:3px;border-top:1px solid #555"></div>

<svg style="left:869px;top:563px" width="94" height="11" viewBox="0 0 94 11"><g fill="#d0d0d0">
<rect x="1" y="0.5" width="2" height="10"/><path d="M10 0.5V10.5L4 5.5z"/>
<path d="M28 0.5V10.5L22 5.5z"/><rect x="29" y="0.5" width="2" height="10"/>
<path d="M43 0.5V10.5L49.5 5.5z"/>
<rect x="62" y="0.5" width="2" height="10"/><path d="M65 0.5V10.5L71 5.5z"/>
<path d="M83 0.5V10.5L89 5.5z"/><rect x="90" y="0.5" width="2" height="10"/></g></svg>
<div class="a" style="left:972px;top:559px;width:19px;height:20px;background:#2e2e2e;border-radius:4px;border:1px solid #222;border-top:1px solid #555"></div>
<svg style="left:974px;top:563px" width="15" height="11" viewBox="0 0 15 11"><path d="M7 3H1V10H13V6" fill="none" stroke="#d0d0d0" stroke-width="1"/><path d="M9 0L14 2.5L9 5z" fill="#d0d0d0"/></svg>
<div class="a" style="left:1232px;top:560px;width:37px;height:18px;background:#2e2e2e;border-radius:3px"></div>
<svg style="left:1233px;top:564px" width="14" height="9" viewBox="0 0 14 9"><path d="M4 0.5H13.5V8.5H4L0.5 4.5z" fill="#ddd"/><circle cx="4.5" cy="4.5" r="1.3" fill="#2e2e2e"/></svg>
<div class="t" style="left:1257px;top:561px;color:#aaa">0</div>
<div class="a" style="left:1272px;top:560px;width:31px;height:18px;background:#2e2e2e;border-radius:3px;box-shadow:inset 0 0 0 1px #262626"></div>
<div class="a" style="left:1291px;top:561px;width:1px;height:16px;background:#3e3e3e"></div>
<svg style="left:1294px;top:565px" width="7" height="8" viewBox="0 0 7 8"><path d="M1 1L6 4L1 7z" fill="none" stroke="#888" stroke-width="0.9"/></svg>
<div class="a" style="left:1307px;top:560px;width:31px;height:18px;background:#2e2e2e;border-radius:3px;box-shadow:inset 0 0 0 1px #262626"></div>
<div class="a" style="left:1326px;top:561px;width:1px;height:16px;background:#3e3e3e"></div>
<svg style="left:1329px;top:565px" width="7" height="8" viewBox="0 0 7 8"><path d="M1 1L6 4L1 7z" fill="none" stroke="#888" stroke-width="0.9"/></svg>
<div class="a" style="left:1342px;top:560px;width:31px;height:18px;background:#2e2e2e;border-radius:3px;box-shadow:inset 0 0 0 1px #262626"></div>
<div class="a" style="left:1361px;top:561px;width:1px;height:16px;background:#3e3e3e"></div>
<svg style="left:1364px;top:565px" width="7" height="8" viewBox="0 0 7 8"><path d="M1 1L6 4L1 7z" fill="none" stroke="#888" stroke-width="0.9"/></svg>
<div class="a" style="left:1377px;top:560px;width:19px;height:18px;background:#2e2e2e;border-radius:3px;box-shadow:inset 0 0 0 1px #262626"></div>
<div class="a" style="left:1401px;top:560px;width:19px;height:18px;background:#2e2e2e;border-radius:3px;box-shadow:inset 0 0 0 1px #262626"></div>
<div class="a" style="left:1423px;top:560px;width:31px;height:18px;background:#2e2e2e;border-radius:3px;box-shadow:inset 0 0 0 1px #262626"></div>
<div class="a" style="left:1442px;top:561px;width:1px;height:16px;background:#3e3e3e"></div>
<svg style="left:1445px;top:565px" width="7" height="8" viewBox="0 0 7 8"><path d="M1 1L6 4L1 7z" fill="none" stroke="#888" stroke-width="0.9"/></svg>
<div class="a" style="left:1458px;top:560px;width:31px;height:18px;background:#2e2e2e;border-radius:3px;box-shadow:inset 0 0 0 1px #262626"></div>
<div class="a" style="left:1477px;top:561px;width:1px;height:16px;background:#3e3e3e"></div>
<svg style="left:1480px;top:565px" width="7" height="8" viewBox="0 0 7 8"><path d="M1 1L6 4L1 7z" fill="none" stroke="#888" stroke-width="0.9"/></svg>
<div class="a" style="left:1494px;top:560px;width:30px;height:18px;background:#2e2e2e;border-radius:3px;box-shadow:inset 0 0 0 1px #262626"></div>
<div class="a" style="left:1512px;top:561px;width:1px;height:16px;background:#3e3e3e"></div>
<svg style="left:1515px;top:565px" width="7" height="8" viewBox="0 0 7 8"><path d="M1 1L6 4L1 7z" fill="none" stroke="#888" stroke-width="0.9"/></svg>
<div class="a" style="left:1528px;top:560px;width:31px;height:18px;background:#2e2e2e;border-radius:3px;box-shadow:inset 0 0 0 1px #262626"></div>
<div class="a" style="left:1547px;top:561px;width:1px;height:16px;background:#3e3e3e"></div>
<svg style="left:1550px;top:565px" width="7" height="8" viewBox="0 0 7 8"><path d="M1 1L6 4L1 7z" fill="none" stroke="#888" stroke-width="0.9"/></svg>
<div class="a" style="left:1563px;top:560px;width:19px;height:18px;background:#2e2e2e;border-radius:3px;box-shadow:inset 0 0 0 1px #262626"></div>

<svg style="left:1275px;top:563px" width="14" height="12" viewBox="0 0 14 12"><path d="M1 4H3.5L7 1V11L3.5 8H1z" fill="#2ecc71"/><path d="M9 3.5 Q10.5 6 9 8.5 M11 2 Q13.5 6 11 10" fill="none" stroke="#2ecc71" stroke-width="1.2"/></svg>
<svg style="left:1311px;top:562px" width="14" height="14" viewBox="0 0 14 14"><path d="M3 12 V7 A4.5 4.5 0 0 1 12 7 V9" fill="none" stroke="#ccc" stroke-width="2"/></svg>
<svg style="left:1345px;top:562px" width="14" height="14" viewBox="0 0 14 14"><path d="M4.5 0V14M9.5 0V14M0 4.5H14M0 9.5H14" stroke="#ccc" stroke-width="1.1"/></svg>
<svg style="left:1379px;top:563px" width="15" height="12" viewBox="0 0 15 12"><g fill="#2ecc71"><rect x="0" y="0" width="3" height="3"/><rect x="0" y="5" width="3" height="6"/><rect x="5" y="0" width="10" height="6"/><rect x="5" y="8" width="10" height="3"/></g></svg>
<svg style="left:1403px;top:564px" width="15" height="10" viewBox="0 0 15 10"><path d="M1 1L5 5L1 9M5 1L9 5L5 9M9 1L13 5L9 9" fill="none" stroke="#ccc" stroke-width="1.6"/></svg>
<svg style="left:1425px;top:562px" width="15" height="13" viewBox="0 0 15 13"><rect x="1" y="1" width="13" height="10" fill="none" stroke="#ddd" stroke-width="1.2"/><path d="M1 12H14" stroke="#ddd" stroke-width="1.5"/></svg>
<svg style="left:1461px;top:562px" width="14" height="14" viewBox="0 0 14 14"><rect x="1" y="1" width="8" height="6" fill="none" stroke="#ccc" stroke-width="1"/><path d="M3 9H11V3M5 11H13V5" fill="none" stroke="#999" stroke-width="1"/></svg>
<svg style="left:1497px;top:562px" width="14" height="14" viewBox="0 0 14 14"><rect x="0.5" y="0.5" width="8" height="8" fill="#ccc"/><rect x="5" y="5" width="8" height="8" fill="#2e2e2e" stroke="#ddd" stroke-width="1"/></svg>
<svg style="left:1531px;top:562px" width="14" height="14" viewBox="0 0 14 14"><g fill="#2ecc71"><rect x="0" y="0" width="3.5" height="3.5"/><rect x="7" y="0" width="3.5" height="3.5"/><rect x="3.5" y="3.5" width="3.5" height="3.5"/><rect x="10.5" y="3.5" width="3.5" height="3.5"/><rect x="0" y="7" width="3.5" height="3.5"/><rect x="7" y="7" width="3.5" height="3.5"/><rect x="3.5" y="10.5" width="3.5" height="3.5"/><rect x="10.5" y="10.5" width="3.5" height="3.5"/></g></svg>
<svg style="left:1566px;top:562px" width="14" height="14" viewBox="0 0 14 14"><g fill="#ddd"><circle cx="7" cy="7" r="4.8"/><rect x="6" y="0" width="2" height="3"/><rect x="6" y="11" width="2" height="3"/><rect x="0" y="6" width="3" height="2"/><rect x="11" y="6" width="3" height="2"/><rect x="6" y="0" width="2" height="3" transform="rotate(45 7 7)"/><rect x="6" y="11" width="2" height="3" transform="rotate(45 7 7)"/><rect x="0" y="6" width="3" height="2" transform="rotate(45 7 7)"/><rect x="11" y="6" width="3" height="2" transform="rotate(45 7 7)"/></g><circle cx="7" cy="7" r="2" fill="#2e2e2e"/></svg>

<!-- RIGHT PANEL: COLOR -->
<div class="a" style="left:1594px;top:85px;width:320px;height:22px;background:#1f1f1f"></div>
<div class="a" style="left:1594px;top:107px;width:320px;height:378px;background:#474747"></div>

<!-- RIGHT PANEL: ALIGN -->
<div class="a" style="left:1593px;top:490px;width:321px;height:22px;background:#1f1f1f"></div>
<div class="a" style="left:1593px;top:512px;width:321px;height:68px;background:#474747"></div>


<!-- COLOR PANEL CONTENT -->
<div class="a" style="left:1594px;top:85px;width:39px;height:22px;background:#474747;border-radius:3px 3px 0 0"></div>
<div class="a" style="left:1633px;top:85px;width:70px;height:22px;background:#2a2a2a;border-radius:3px 3px 0 0"></div>
<div class="t" style="left:1598px;top:89px;color:#e8e8e8">Color</div>
<div class="t" style="left:1639px;top:89px;color:#e8e8e8">Add Layers</div>
<div class="a" style="left:1900px;top:107px;width:14px;height:378px;background:#3a3a3a"></div>
<div class="a" style="left:1902px;top:153px;width:10px;height:303px;background:#555;border-radius:5px"></div>
<div class="a" style="left:1594px;top:107px;width:306px;height:378px;overflow:hidden">
  <div class="a" style="left:52px;top:-47px;width:200px;height:200px;border-radius:50%;background:conic-gradient(from 90deg,#ff0000,#ff00ff,#0000ff,#00ffff,#00ff00,#ffff00,#ff0000)"></div>
  <div class="a" style="left:77px;top:-22px;width:150px;height:150px;border-radius:50%;background:#474747"></div>
  <div class="a" style="left:108px;top:9px;width:90px;height:90px;background:linear-gradient(to right,#000,rgba(0,0,0,0)),linear-gradient(to bottom,#fff,#2200ff)"></div>
  <div class="a" style="left:192px;top:63px;width:12px;height:12px;border:1.5px solid #eee;border-radius:50%"></div>
  <div class="a" style="left:111px;top:126px;width:13px;height:13px;border:1.5px solid #eee;border-radius:50%"></div>
</div>
<div class="a" style="left:1600px;top:273px;width:22px;height:22px;background:#6755ff;border-radius:3px"></div>
<div class="t" style="left:1625px;top:277px">Medium Slateblue</div>
<div class="btn" style="left:1871px;top:273px;width:22px;height:22px;border-radius:4px"></div>
<svg style="left:1875px;top:277px" width="14" height="14" viewBox="0 0 14 14"><path d="M1.5 12.5 L9 5" stroke="#ccc" stroke-width="1.4"/><circle cx="10.5" cy="3.5" r="2.4" fill="#ccc"/></svg>
<div class="a" style="left:1600px;top:300px;width:49px;height:18px;background:#3a3a3a;border:1px solid #2e2e2e;border-radius:2px"></div>
<div class="t" style="left:1603px;top:302px">Hex</div>
<svg style="left:1635px;top:306px" width="10" height="6" viewBox="0 0 10 6"><path d="M1 1 L5 5 L9 1" fill="none" stroke="#ccc" stroke-width="1"/></svg>
<div class="inp" style="left:1653px;top:298px;width:240px;height:22px;background:#262626"></div>
<div class="t" style="left:1658px;top:302px;color:#555">#</div>
<div class="t" style="left:1670px;top:302px">6755ff</div>
<div class="a" style="left:1600px;top:330px;width:234px;height:4px;background:#e6e6e6;border-radius:2px"></div>
<div class="a" style="left:1828px;top:327px;width:11px;height:11px;background:#5fbfa3;border-radius:50%;border:2px solid #49a88a"></div>
<div class="inp" style="left:1849px;top:324px;width:44px;height:16px;background:#2a2a2a"></div>
<div class="t" style="left:1853px;top:326px;color:#555">A</div>
<div class="t" style="left:1866px;top:326px">255</div>
<div class="a" style="left:1597px;top:346px;width:299px;height:22px;background:#222"></div>
<div class="a" style="left:1599px;top:348px;width:148px;height:20px;background:#474747;border-radius:3px 3px 0 0"></div>
<div class="a" style="left:1748px;top:348px;width:146px;height:20px;background:#2e2e2e;border-radius:3px 3px 0 0"></div>
<div class="t" style="left:1648px;top:351px">Swatches</div>
<div class="t" style="left:1793px;top:351px;color:#c8c8c8">Generator</div>
<div class="a" style="left:1598px;top:371px;width:257px;height:18px;background:#5a5a5a;border-radius:3px"></div>
<div class="a" style="left:1600px;top:372px;width:61px;height:16px;background:#262626;border-radius:3px"></div>
<svg style="left:1605px;top:375px" width="11" height="10" viewBox="0 0 11 10"><path d="M1 0V10M3.5 0V10M6 0V10M7 0 L10.5 10" stroke="#2ecc71" stroke-width="1.4"/></svg>
<div class="t" style="left:1621px;top:373px">Library</div>
<svg style="left:1671px;top:374px" width="11" height="11" viewBox="0 0 11 11"><path d="M1 1h4l1 1h4v8H1z" fill="none" stroke="#ddd" stroke-width="1"/><path d="M3 5h5M3 7.5h5" stroke="#ddd" stroke-width="1"/></svg>
<div class="t" style="left:1687px;top:373px">Project</div>
<svg style="left:1738px;top:373px" width="10" height="12" viewBox="0 0 10 12"><path d="M1 1h5l3 3v7H1z" fill="none" stroke="#ddd" stroke-width="1"/></svg>
<div class="t" style="left:1752px;top:373px">Scene</div>
<svg style="left:1800px;top:374px" width="11" height="11" viewBox="0 0 11 11"><path d="M5.5 1 A4.5 4.5 0 1 0 10 5.5 V1z" fill="none" stroke="#ddd" stroke-width="1"/></svg>
<div class="t" style="left:1815px;top:373px">Labels</div>
<div class="a" style="left:1858px;top:371px;width:37px;height:18px;background:#5a5a5a;border-radius:3px"></div>
<div class="a" style="left:1860px;top:372px;width:15px;height:16px;background:#262626;border-radius:2px"></div>
<svg style="left:1863px;top:376px" width="9" height="9" viewBox="0 0 9 9"><g fill="#2ecc71"><rect x="0" y="0" width="3.5" height="3.5"/><rect x="5.5" y="0" width="3.5" height="3.5"/><rect x="0" y="5.5" width="3.5" height="3.5"/><rect x="5.5" y="5.5" width="3.5" height="3.5"/></g></svg>
<svg style="left:1880px;top:375px" width="11" height="10" viewBox="0 0 11 10"><path d="M0 1h11M0 5h11M0 9h11" stroke="#ddd" stroke-width="1.1"/></svg>
<div class="a" style="left:1598px;top:393px;width:276px;height:16px;background:#474747;border:1px solid #333;border-radius:2px"></div>
<div class="t" style="left:1601px;top:394px">new</div>
<svg style="left:1860px;top:398px" width="10" height="6" viewBox="0 0 10 6"><path d="M1 1 L5 5 L9 1" fill="none" stroke="#ccc" stroke-width="1"/></svg>
<svg style="left:1880px;top:400px" width="14" height="3" viewBox="0 0 14 3"><circle cx="1.5" cy="1.5" r="1.1" fill="#ddd"/><circle cx="7" cy="1.5" r="1.1" fill="#ddd"/><circle cx="12.5" cy="1.5" r="1.1" fill="#ddd"/></svg>
<div class="a" style="left:1598px;top:410px;width:297px;height:75px;background:#262626"></div>
<div class="a" style="left:1600px;top:412px;width:18px;height:18px;background:#8b4cf0;border-radius:3px"></div>
<div class="a" style="left:1622px;top:412px;width:18px;height:18px;background:#4da0f5;border-radius:3px"></div>
<div class="a" style="left:1644px;top:412px;width:18px;height:18px;background:#ff7043;border-radius:3px"></div>
<div class="a" style="left:1666px;top:412px;width:18px;height:18px;background:#4aefa0;border-radius:3px"></div>
<div class="a" style="left:1688px;top:412px;width:18px;height:18px;background:#ff4d5a;border-radius:3px"></div>
<div class="a" style="left:1710px;top:412px;width:18px;height:18px;background:#ff4dc0;border-radius:3px"></div>
<div class="a" style="left:1732px;top:412px;width:18px;height:18px;background:#ffd04d;border-radius:3px"></div>
<div class="a" style="left:1754px;top:412px;width:18px;height:18px;background:#3a66d6;border-radius:3px"></div>
<div class="a" style="left:1776px;top:412px;width:18px;height:18px;background:#5ce0d0;border-radius:3px"></div>
<div class="a" style="left:1798px;top:412px;width:18px;height:18px;background:#d47ed8;border-radius:3px"></div>
<div class="a" style="left:1820px;top:412px;width:18px;height:18px;background:#aee88a;border-radius:3px"></div>
<div class="a" style="left:1842px;top:412px;width:18px;height:18px;background:#6a55ff;border-radius:3px"></div>

<!-- ALIGN PANEL -->
<div class="a" style="left:1593px;top:490px;width:38px;height:22px;background:#474747;border-radius:3px 3px 0 0"></div>
<div class="t" style="left:1598px;top:494px;color:#e8e8e8">Align</div>
<div class="t" style="left:1601px;top:525px">Alignment</div>
<div class="t" style="left:1601px;top:553px">Distribution</div>
<div class="a" style="left:1790px;top:522px;width:54px;height:18px;background:#1e1e1e;border-radius:4px"></div>
<div class="a" style="left:1791px;top:523px;width:16px;height:16px;background:#2b2b2b;border-radius:3px"></div>
<div class="a" style="left:1809px;top:523px;width:16px;height:16px;background:#2b2b2b;border-radius:3px"></div>
<div class="a" style="left:1827px;top:523px;width:16px;height:16px;background:#2b2b2b;border-radius:3px"></div>
<div class="a" style="left:1852px;top:522px;width:54px;height:18px;background:#1e1e1e;border-radius:4px"></div>
<div class="a" style="left:1853px;top:523px;width:16px;height:16px;background:#2b2b2b;border-radius:3px"></div>
<div class="a" style="left:1871px;top:523px;width:16px;height:16px;background:#2b2b2b;border-radius:3px"></div>
<div class="a" style="left:1889px;top:523px;width:16px;height:16px;background:#2b2b2b;border-radius:3px"></div>
<div class="a" style="left:1790px;top:551px;width:54px;height:17px;background:#1e1e1e;border-radius:4px"></div>
<div class="a" style="left:1791px;top:552px;width:16px;height:15px;background:#2b2b2b;border-radius:3px"></div>
<div class="a" style="left:1809px;top:552px;width:16px;height:15px;background:#2b2b2b;border-radius:3px"></div>
<div class="a" style="left:1827px;top:552px;width:16px;height:15px;background:#2b2b2b;border-radius:3px"></div>
<svg style="left:1790px;top:522px" width="116" height="46" viewBox="0 0 116 46"><g stroke="#e6e6e6" fill="none">
<path d="M3.5 2V16" stroke-width="1"/><path d="M6 7H11M6 12H16" stroke-width="2"/>
<path d="M27.5 2V16" stroke-width="1"/><path d="M23 7H32M22 12H33" stroke-width="2"/>
<path d="M50.5 2V16" stroke-width="1"/><path d="M43 7H48M38 12H48" stroke-width="2"/>
<path d="M64 3.5H77" stroke-width="1"/><path d="M67 6V14M72 6V10" stroke-width="2"/>
<path d="M82 9.5H95" stroke-width="1"/><path d="M85.5 5V14M90.5 5V14" stroke-width="2"/>
<path d="M100 15.5H113" stroke-width="1"/><path d="M103 9V13M108 3V13" stroke-width="2"/>
<path d="M3.5 31V44M15.5 31V44" stroke-width="1"/><path d="M9.5 33V42" stroke-width="2"/>
<path d="M21 30.5H33M21 43.5H33" stroke-width="1"/><path d="M23 37H31" stroke-width="2"/>
<path d="M39 33V30.5H41.5M51 41.5V44H48.5" stroke-width="1"/><path d="M43 40V37M46.5 37V34" stroke-width="2"/>
</g></svg>

<!-- SCENE WINDOW -->
<div class="a" style="left:494px;top:586px;width:1420px;height:22px;background:#1f1f1f"></div>
<div class="a" style="left:494px;top:608px;width:1420px;height:1px;background:#3ecf7a"></div>
<div class="a" style="left:494px;top:609px;width:1420px;height:389px;background:#282828"></div>
<div class="a" style="left:494px;top:1004px;width:1420px;height:22px;background:#3a3a3a"></div>

<!-- SCENE WINDOW CONTENT -->
<div class="a" style="left:494px;top:586px;width:89px;height:22px;background:#474747;border-radius:3px 3px 0 0"></div>
<div class="a" style="left:584px;top:586px;width:100px;height:22px;background:#2a2a2a;border-radius:3px 3px 0 0"></div>
<div class="a" style="left:685px;top:586px;width:112px;height:22px;background:#2a2a2a;border-radius:3px 3px 0 0"></div>
<div class="t" style="left:499px;top:590px;color:#e8e8e8">Scene Window</div>
<div class="t" style="left:589px;top:590px;color:#e8e8e8">JavaScript Editor</div>
<div class="t" style="left:690px;top:590px;color:#e8e8e8">Dependency Graph</div>
<!-- comp tabs row -->
<div class="a" style="left:494px;top:609px;width:1420px;height:21px;background:#262626"></div>
<div class="t" style="left:627px;top:612px;color:#b8b8b8">Composition 1</div>
<svg style="left:835px;top:616px" width="8" height="8" viewBox="0 0 8 8"><path d="M0.5 0.5L7.5 7.5M7.5 0.5L0.5 7.5" stroke="#999" stroke-width="1"/></svg>
<div class="a" style="left:852px;top:615px;width:1px;height:10px;background:#999"></div>
<div class="t" style="left:979px;top:612px;color:#b8b8b8">Composition 2</div>
<svg style="left:1187px;top:616px" width="8" height="8" viewBox="0 0 8 8"><path d="M0.5 0.5L7.5 7.5M7.5 0.5L0.5 7.5" stroke="#999" stroke-width="1"/></svg>
<div class="a" style="left:1204px;top:615px;width:1px;height:10px;background:#999"></div>
<div class="t" style="left:1331px;top:612px;color:#b8b8b8">Composition 3</div>
<svg style="left:1539px;top:616px" width="8" height="8" viewBox="0 0 8 8"><path d="M0.5 0.5L7.5 7.5M7.5 0.5L0.5 7.5" stroke="#999" stroke-width="1"/></svg>
<div class="a" style="left:1557px;top:610px;width:352px;height:20px;background:#474747;border-radius:3px 3px 0 0"></div>
<div class="t" style="left:1684px;top:612px;color:#e8e8e8">Composition 4</div>
<svg style="left:1891px;top:616px" width="8" height="8" viewBox="0 0 8 8"><path d="M0.5 0.5L7.5 7.5M7.5 0.5L0.5 7.5" stroke="#aaa" stroke-width="1"/></svg>

<!-- layer panel -->
<div class="a" style="left:494px;top:630px;width:465px;height:42px;background:#474747"></div>
<div class="a" style="left:494px;top:672px;width:453px;height:290px;background:#282828"></div>
<div class="a" style="left:947px;top:672px;width:12px;height:290px;background:#3d3d3d"></div>
<div class="a" style="left:948px;top:674px;width:9px;height:286px;background:#4a4a4a;border-radius:4px"></div>
<div class="a" style="left:959px;top:630px;width:7px;height:332px;background:#1e1e1e"></div>
<div class="a" style="left:496px;top:632px;width:254px;height:20px;background:#262626;border-radius:10px"></div>
<svg style="left:500px;top:636px" width="12" height="12" viewBox="0 0 12 12"><circle cx="5" cy="5" r="4" fill="none" stroke="#ddd" stroke-width="1.2"/><path d="M8 8 L11 11" stroke="#ddd" stroke-width="1.8"/></svg>
<div class="t" style="left:520px;top:635px;color:#8d8d8d">Enter a layer name</div>
<div class="btn" style="left:754px;top:633px;width:19px;height:19px"></div>
<svg style="left:757px;top:636px" width="13" height="13" viewBox="0 0 13 13"><path d="M6.5 1V12M1 6.5H12" stroke="#eee" stroke-width="1.8"/></svg>
<div class="btn" style="left:798px;top:633px;width:19px;height:19px"></div>
<svg style="left:800px;top:635px" width="15" height="15" viewBox="0 0 15 15"><circle cx="5" cy="10" r="3.5" fill="#555"/><circle cx="7" cy="8" r="3.5" fill="#777"/><circle cx="10" cy="5" r="4" fill="#ddd"/></svg>
<div class="btn" style="left:819px;top:633px;width:19px;height:19px"></div>
<svg style="left:822px;top:636px" width="13" height="13" viewBox="0 0 13 13"><g fill="#ddd"><circle cx="2" cy="2" r="1"/><circle cx="9" cy="2" r="1"/><circle cx="2" cy="8" r="1"/><path d="M7 5 l1 2.5 2.5 1 -2.5 1 -1 2.5 -1 -2.5 -2.5 -1 2.5 -1z"/></g></svg>
<div class="btn" style="left:841px;top:633px;width:19px;height:19px"></div>
<svg style="left:843px;top:636px" width="15" height="13" viewBox="0 0 15 13"><g stroke="#ddd" stroke-width="1.1" fill="none"><path d="M1 2h2M7 2h7M1 6.5h5M10 6.5h4M1 11h2M7 11h7"/><circle cx="5" cy="2" r="1.5"/><circle cx="8" cy="6.5" r="1.5"/><circle cx="5" cy="11" r="1.5"/></g></svg>
<div class="inp" style="left:863px;top:632px;width:94px;height:20px;background:#2a2a2a"></div>
<div class="t" style="left:868px;top:634px;color:#555">F</div>
<div class="t" style="left:880px;top:635px">77</div>
<!-- header icons -->
<svg style="left:500px;top:656px" width="11" height="13" viewBox="0 0 11 13"><path d="M2.5 6V4 A3 3 0 0 1 8.5 4 V6" fill="none" stroke="#ddd" stroke-width="1.4"/><rect x="1" y="6" width="9" height="7" fill="#ddd"/><circle cx="5.5" cy="9.5" r="1" fill="#474747"/></svg>
<svg style="left:517px;top:658px" width="14" height="10" viewBox="0 0 14 10"><path d="M1 5 Q7 -1 13 5 Q7 11 1 5z" fill="none" stroke="#ccc" stroke-width="1.1"/><circle cx="7" cy="5" r="2" fill="#ccc"/></svg>
<svg style="left:536px;top:656px" width="13" height="14" viewBox="0 0 13 14"><path d="M6.5 1 L12 4 V10 L6.5 13 L1 10 V4z M1 4 L6.5 7 L12 4 M6.5 7 V13" fill="none" stroke="#ccc" stroke-width="1.1"/></svg>
<svg style="left:555px;top:657px" width="14" height="12" viewBox="0 0 14 12"><path d="M1 4H4L8 1V11L4 8H1z" fill="#ddd"/><path d="M10 3.5 Q11.5 6 10 8.5 M12 2 Q14.5 6 12 10" fill="none" stroke="#ddd" stroke-width="1.1"/></svg>
<svg style="left:575px;top:656px" width="13" height="13" viewBox="0 0 13 13"><path d="M1.5 11.5 L7.5 5.5" stroke="#c8c8c8" stroke-width="2.2" stroke-linecap="round"/><path d="M1.8 11.2 L7.2 5.8" stroke="#474747" stroke-width="0.8"/><path d="M6 4 L9 7" stroke="#c8c8c8" stroke-width="1.6"/><circle cx="9.8" cy="3.2" r="2.2" fill="#c8c8c8"/></svg>
<svg style="left:593px;top:658px" width="14" height="9" viewBox="0 0 14 9"><path d="M4 0.5H13.5V8.5H4L0.5 4.5z" fill="#ddd"/><circle cx="4.5" cy="4.5" r="1.3" fill="#474747"/></svg>
<div class="t" style="left:649px;top:656px">Name</div>
<div class="a" style="left:494px;top:673px;width:452px;height:21px;background:#4a524b"></div>
<div class="a" style="left:497px;top:674px;width:17px;height:18px;background:#424a43;border-radius:3px"></div>
<div class="a" style="left:515px;top:674px;width:18px;height:18px;background:#424a43;border-radius:3px"></div>
<svg style="left:518px;top:677px" width="12" height="12" viewBox="0 0 12 12"><path d="M10.5 4.5 A5 5 0 1 1 8 1.5" fill="none" stroke="#999" stroke-width="1"/><path d="M3.5 5.5 L6 8 L11 2" fill="none" stroke="#999" stroke-width="1.1"/></svg>
<div class="a" style="left:573px;top:675px;width:16px;height:16px;background:#5e9e74;border-radius:3px"></div>
<svg style="left:594px;top:679px" width="14" height="9" viewBox="0 0 14 9"><path d="M4 0.5H13.5V8.5H4L0.5 4.5z" fill="#999"/><circle cx="4.5" cy="4.5" r="1.3" fill="#4a524b"/></svg>
<div class="a" style="left:610px;top:674px;width:32px;height:18px;background:#424a43;border-radius:3px"></div>
<svg style="left:614px;top:680px" width="9" height="6" viewBox="0 0 9 6"><path d="M1 1 L4.5 4.5 L8 1" fill="none" stroke="#888" stroke-width="1"/></svg>
<svg style="left:648px;top:674px" width="16" height="17" viewBox="0 0 16 17"><path d="M0.5 7.5 H5 V11 H9.5 V16.5 H0.5z" fill="#7f98b5"/><path d="M6 2H13M8 5H13M8 8H13" stroke="#aaa" stroke-width="1"/></svg>
<div class="t" style="left:667px;top:676px;color:#9a9a9a;text-decoration:line-through;">Color Array</div>
<svg style="left:888px;top:678px" width="10" height="10" viewBox="0 0 10 10"><circle cx="5" cy="5" r="4" fill="none" stroke="#777" stroke-width="1"/><path d="M2 8L8 2" stroke="#777" stroke-width="1"/></svg>
<div class="a" style="left:905px;top:675px;width:21px;height:16px;background:#454c46;border-radius:3px"></div>
<svg style="left:907px;top:679px" width="17" height="8" viewBox="0 0 17 8"><path d="M6 0.5V7.5H3L0.5 4L3 0.5z" fill="#8c7a55"/><path d="M11 0.5V7.5H14L16.5 4L14 0.5z" fill="#555"/></svg>
<div class="a" style="left:494px;top:695px;width:452px;height:21px;background:#3a3a3a"></div>
<div class="a" style="left:497px;top:696px;width:17px;height:18px;background:#2e2e2e;border-radius:3px"></div>
<div class="a" style="left:515px;top:696px;width:18px;height:18px;background:#2e2e2e;border-radius:3px"></div>
<svg style="left:518px;top:699px" width="12" height="12" viewBox="0 0 12 12"><path d="M10.5 4.5 A5 5 0 1 1 8 1.5" fill="none" stroke="#999" stroke-width="1"/><path d="M3.5 5.5 L6 8 L11 2" fill="none" stroke="#999" stroke-width="1.1"/></svg>
<div class="a" style="left:573px;top:697px;width:16px;height:16px;background:#8e9b5a;border-radius:3px"></div>
<svg style="left:594px;top:701px" width="14" height="9" viewBox="0 0 14 9"><path d="M4 0.5H13.5V8.5H4L0.5 4.5z" fill="#999"/><circle cx="4.5" cy="4.5" r="1.3" fill="#3a3a3a"/></svg>
<svg style="left:668px;top:699px" width="14" height="13" viewBox="0 0 14 13"><path d="M0.19999999999999996 0.19999999999999996l2.6 2.6M2.8 0.19999999999999996l-2.6 2.6M9.7 -0.30000000000000004l2.6 2.6M12.3 -0.30000000000000004l-2.6 2.6M4.7 3.7l2.6 2.6M7.3 3.7l-2.6 2.6M1.2 9.2l2.6 2.6M3.8 9.2l-2.6 2.6M9.2 7.7l2.6 2.6M11.8 7.7l-2.6 2.6" stroke="#6aae6a" stroke-width="0.9" fill="none"/></svg>
<div class="t" style="left:686px;top:698px;color:#9a9a9a;text-decoration:line-through;">Random [Index]</div>
<svg style="left:888px;top:700px" width="10" height="10" viewBox="0 0 10 10"><circle cx="5" cy="5" r="4" fill="none" stroke="#777" stroke-width="1"/><path d="M2 8L8 2" stroke="#777" stroke-width="1"/></svg>
<div class="a" style="left:905px;top:697px;width:21px;height:16px;background:#333;border-radius:3px"></div>
<svg style="left:907px;top:701px" width="17" height="8" viewBox="0 0 17 8"><path d="M6 0.5V7.5H3L0.5 4L3 0.5z" fill="#555"/><path d="M11 0.5V7.5H14L16.5 4L14 0.5z" fill="#c040e0"/></svg>
<svg style="left:931px;top:700px" width="10" height="10" viewBox="0 0 10 10"><circle cx="5" cy="5" r="4.2" fill="none" stroke="#777" stroke-width="1"/></svg>
<div class="a" style="left:494px;top:717px;width:452px;height:21px;background:#3a3a3a"></div>
<div class="a" style="left:497px;top:718px;width:17px;height:18px;background:#2e2e2e;border-radius:3px"></div>
<div class="a" style="left:515px;top:718px;width:18px;height:18px;background:#2e2e2e;border-radius:3px"></div>
<svg style="left:518px;top:721px" width="12" height="12" viewBox="0 0 12 12"><path d="M10.5 4.5 A5 5 0 1 1 8 1.5" fill="none" stroke="#999" stroke-width="1"/><path d="M3.5 5.5 L6 8 L11 2" fill="none" stroke="#999" stroke-width="1.1"/></svg>
<div class="a" style="left:573px;top:719px;width:16px;height:16px;background:#8e9b5a;border-radius:3px"></div>
<svg style="left:594px;top:723px" width="14" height="9" viewBox="0 0 14 9"><path d="M4 0.5H13.5V8.5H4L0.5 4.5z" fill="#999"/><circle cx="4.5" cy="4.5" r="1.3" fill="#3a3a3a"/></svg>
<svg style="left:646px;top:721px" width="17" height="12" viewBox="0 0 17 12"><path d="M1 6 L3.5 1 L7 11 L10.5 1 L14 11 L16 6" fill="none" stroke="#6aa86a" stroke-width="1.1"/></svg>
<div class="t" style="left:667px;top:720px;color:#9a9a9a;text-decoration:line-through;">Oscillator [Position.Z] Cosine</div>
<svg style="left:888px;top:722px" width="10" height="10" viewBox="0 0 10 10"><circle cx="5" cy="5" r="4" fill="none" stroke="#777" stroke-width="1"/><path d="M2 8L8 2" stroke="#777" stroke-width="1"/></svg>
<div class="a" style="left:905px;top:719px;width:21px;height:16px;background:#333;border-radius:3px"></div>
<svg style="left:907px;top:723px" width="17" height="8" viewBox="0 0 17 8"><path d="M6 0.5V7.5H3L0.5 4L3 0.5z" fill="#8c7a55"/><path d="M11 0.5V7.5H14L16.5 4L14 0.5z" fill="#c040e0"/></svg>
<svg style="left:931px;top:722px" width="10" height="10" viewBox="0 0 10 10"><circle cx="5" cy="5" r="4.2" fill="none" stroke="#777" stroke-width="1"/></svg>
<div class="a" style="left:494px;top:739px;width:452px;height:21px;background:#3a3a3a"></div>
<div class="a" style="left:497px;top:740px;width:17px;height:18px;background:#2e2e2e;border-radius:3px"></div>
<div class="a" style="left:515px;top:740px;width:18px;height:18px;background:#2e2e2e;border-radius:3px"></div>
<svg style="left:518px;top:743px" width="12" height="12" viewBox="0 0 12 12"><path d="M10.5 4.5 A5 5 0 1 1 8 1.5" fill="none" stroke="#999" stroke-width="1"/><path d="M3.5 5.5 L6 8 L11 2" fill="none" stroke="#999" stroke-width="1.1"/></svg>
<div class="a" style="left:573px;top:741px;width:16px;height:16px;background:#8e9b5a;border-radius:3px"></div>
<svg style="left:594px;top:745px" width="14" height="9" viewBox="0 0 14 9"><path d="M4 0.5H13.5V8.5H4L0.5 4.5z" fill="#999"/><circle cx="4.5" cy="4.5" r="1.3" fill="#3a3a3a"/></svg>
<svg style="left:646px;top:743px" width="17" height="12" viewBox="0 0 17 12"><path d="M1 6 L3.5 1 L7 11 L10.5 1 L14 11 L16 6" fill="none" stroke="#6aa86a" stroke-width="1.1"/></svg>
<div class="t" style="left:667px;top:742px;color:#9a9a9a;text-decoration:line-through;">Oscillator [Position.X] Sine</div>
<svg style="left:888px;top:744px" width="10" height="10" viewBox="0 0 10 10"><circle cx="5" cy="5" r="4" fill="none" stroke="#777" stroke-width="1"/><path d="M2 8L8 2" stroke="#777" stroke-width="1"/></svg>
<div class="a" style="left:905px;top:741px;width:21px;height:16px;background:#333;border-radius:3px"></div>
<svg style="left:907px;top:745px" width="17" height="8" viewBox="0 0 17 8"><path d="M6 0.5V7.5H3L0.5 4L3 0.5z" fill="#8c7a55"/><path d="M11 0.5V7.5H14L16.5 4L14 0.5z" fill="#c040e0"/></svg>
<svg style="left:931px;top:744px" width="10" height="10" viewBox="0 0 10 10"><circle cx="5" cy="5" r="4.2" fill="none" stroke="#777" stroke-width="1"/></svg>
<div class="a" style="left:494px;top:761px;width:452px;height:21px;background:#5c5540"></div>
<div class="a" style="left:497px;top:762px;width:17px;height:18px;background:#2a2a2a;border-radius:3px"></div>
<div class="a" style="left:515px;top:762px;width:18px;height:18px;background:#2a2a2a;border-radius:3px"></div>
<div class="a" style="left:534px;top:762px;width:18px;height:18px;background:#2a2a2a;border-radius:3px"></div>
<svg style="left:517px;top:766px" width="14" height="10" viewBox="0 0 14 10"><path d="M1 5 Q7 -1 13 5 Q7 11 1 5z" fill="none" stroke="#ccc" stroke-width="1.1"/><circle cx="7" cy="5" r="2" fill="#ccc"/></svg>
<div class="a" style="left:573px;top:763px;width:16px;height:16px;background:#ffe082;border-radius:3px"></div>
<svg style="left:594px;top:767px" width="14" height="9" viewBox="0 0 14 9"><path d="M4 0.5H13.5V8.5H4L0.5 4.5z" fill="#ddd"/><circle cx="4.5" cy="4.5" r="1.3" fill="#5c5540"/></svg>
<div class="a" style="left:610px;top:762px;width:32px;height:18px;background:#2e2e2e;border-radius:3px"></div>
<svg style="left:614px;top:768px" width="9" height="6" viewBox="0 0 9 6"><path d="M1 1 L4.5 4.5 L8 1" fill="none" stroke="#888" stroke-width="1"/></svg>
<svg style="left:649px;top:764px" width="13" height="14" viewBox="0 0 13 14"><rect x="0.75" y="0.75" width="11.5" height="12.5" fill="none" stroke="#f0d860" stroke-width="1.3" stroke-dasharray="3 2"/></svg>
<div class="t" style="left:667px;top:764px;color:#ececec;">Ellipse Shape</div>
<svg style="left:931px;top:766px" width="10" height="10" viewBox="0 0 10 10"><circle cx="5" cy="5" r="4.2" fill="none" stroke="#777" stroke-width="1"/></svg>
<div class="a" style="left:494px;top:783px;width:452px;height:21px;background:#3a3a3a"></div>
<div class="a" style="left:497px;top:784px;width:17px;height:18px;background:#2e2e2e;border-radius:3px"></div>
<div class="a" style="left:515px;top:784px;width:18px;height:18px;background:#2e2e2e;border-radius:3px"></div>
<svg style="left:518px;top:787px" width="12" height="12" viewBox="0 0 12 12"><path d="M10.5 4.5 A5 5 0 1 1 8 1.5" fill="none" stroke="#999" stroke-width="1"/><path d="M3.5 5.5 L6 8 L11 2" fill="none" stroke="#999" stroke-width="1.1"/></svg>
<div class="a" style="left:573px;top:785px;width:16px;height:16px;background:#4f6aa8;border-radius:3px"></div>
<svg style="left:594px;top:789px" width="14" height="9" viewBox="0 0 14 9"><path d="M4 0.5H13.5V8.5H4L0.5 4.5z" fill="#999"/><circle cx="4.5" cy="4.5" r="1.3" fill="#3a3a3a"/></svg>
<svg style="left:666px;top:786px" width="15" height="14" viewBox="0 0 15 14"><path d="M1 2v6M1 6a2 2 0 1 0 4 0a2 2 0 1 0 -4 0M6 2v6M6 6a2 2 0 1 0 4 0a2 2 0 1 0 -4 0M14 4.5a2 2 0 1 0 0 3M1 11h3M6 11h3M11 11h3" fill="none" stroke="#7f98b5" stroke-width="1"/></svg>
<div class="t" style="left:686px;top:786px;color:#9a9a9a;text-decoration:line-through;">String Generator [String]</div>
<svg style="left:888px;top:788px" width="10" height="10" viewBox="0 0 10 10"><circle cx="5" cy="5" r="4" fill="none" stroke="#777" stroke-width="1"/><path d="M2 8L8 2" stroke="#777" stroke-width="1"/></svg>
<div class="a" style="left:905px;top:785px;width:21px;height:16px;background:#333;border-radius:3px"></div>
<svg style="left:907px;top:789px" width="17" height="8" viewBox="0 0 17 8"><path d="M6 0.5V7.5H3L0.5 4L3 0.5z" fill="#555"/><path d="M11 0.5V7.5H14L16.5 4L14 0.5z" fill="#c040e0"/></svg>
<svg style="left:931px;top:788px" width="10" height="10" viewBox="0 0 10 10"><circle cx="5" cy="5" r="4.2" fill="none" stroke="#777" stroke-width="1"/></svg>
<div class="a" style="left:494px;top:805px;width:452px;height:21px;background:#3a3a3a"></div>
<div class="a" style="left:497px;top:806px;width:17px;height:18px;background:#2e2e2e;border-radius:3px"></div>
<div class="a" style="left:515px;top:806px;width:18px;height:18px;background:#2e2e2e;border-radius:3px"></div>
<div class="a" style="left:534px;top:806px;width:18px;height:18px;background:#2a2a2a;border-radius:3px"></div>
<svg style="left:517px;top:810px" width="14" height="10" viewBox="0 0 14 10"><path d="M1 5 Q7 -1 13 5 Q7 11 1 5z" fill="none" stroke="#ccc" stroke-width="1.1"/><circle cx="7" cy="5" r="2" fill="#ccc"/></svg>
<div class="a" style="left:573px;top:807px;width:16px;height:16px;background:#c79cf5;border-radius:3px"></div>
<svg style="left:594px;top:811px" width="14" height="9" viewBox="0 0 14 9"><path d="M4 0.5H13.5V8.5H4L0.5 4.5z" fill="#ddd"/><circle cx="4.5" cy="4.5" r="1.3" fill="#3a3a3a"/></svg>
<svg style="left:666px;top:807px" width="16" height="16" viewBox="0 0 16 16"><rect x="1" y="1" width="14" height="14" fill="none" stroke="#ddd" stroke-width="1" stroke-dasharray="2 1.5"/><path d="M4 4H12V6.5H11L10.7 5.5H9V12H10V13H6V12H7V5.5H5.3L5 6.5H4z" fill="#f0d860"/></svg>
<div class="t" style="left:686px;top:808px;color:#ececec;">Cavalry</div>
<div class="a" style="left:905px;top:807px;width:21px;height:16px;background:#333;border-radius:3px"></div>
<svg style="left:907px;top:811px" width="17" height="8" viewBox="0 0 17 8"><path d="M6 0.5V7.5H3L0.5 4L3 0.5z" fill="#8c7a55"/><path d="M11 0.5V7.5H14L16.5 4L14 0.5z" fill="#555"/></svg>
<svg style="left:931px;top:810px" width="10" height="10" viewBox="0 0 10 10"><circle cx="5" cy="5" r="4.2" fill="none" stroke="#777" stroke-width="1"/></svg>

<div class="a" style="left:549px;top:671px;width:402px;height:25px;border:3px solid #b5e61d"></div>
<div class="a" style="left:492px;top:757px;width:454px;height:28px;border:3px solid #b5e61d"></div>
<div class="a" style="left:931px;top:678px;width:10px;height:10px;background:#38aaf0;border-radius:50%;z-index:51"></div>

<!-- layer panel bottom -->
<div class="a" style="left:494px;top:962px;width:465px;height:14px;background:#282828"></div>
<div class="a" style="left:495px;top:964px;width:449px;height:10px;background:#4a4a4a;border-radius:5px"></div>
<div class="a" style="left:494px;top:976px;width:465px;height:22px;background:#474747"></div>
<div class="btn" style="left:497px;top:978px;width:19px;height:18px;border-radius:4px"></div>
<svg style="left:500px;top:983px" width="14" height="9" viewBox="0 0 14 9"><path d="M4 0.5H13.5V8.5H4L0.5 4.5z" fill="#ddd"/><circle cx="4.5" cy="4.5" r="1.3" fill="#2b2b2b"/></svg>
<div class="t" style="left:520px;top:980px">1 selected</div>
<div class="btn" style="left:750px;top:978px;width:19px;height:18px;border-radius:4px"></div>
<div class="a" style="left:754px;top:982px;width:11px;height:10px;border:1px solid #ccc"></div>
<div class="a" style="left:758px;top:985px;width:3px;height:3px;background:#ccc"></div>
<div class="a" style="left:773px;top:978px;width:183px;height:18px;background:#5a5a5a;border-radius:3px"></div>
<div class="a" style="left:774px;top:979px;width:86px;height:16px;background:#262626;border-radius:3px"></div>
<svg style="left:779px;top:982px" width="12" height="10" viewBox="0 0 12 10"><path d="M2 1H11M0 5H9M2 9H11" stroke="#2ecc71" stroke-width="1.6"/></svg>
<div class="t" style="left:796px;top:980px">Time Editor</div>
<svg style="left:867px;top:981px" width="13" height="12" viewBox="0 0 13 12"><path d="M1.5 0V11.5H13" stroke="#aaa" stroke-width="1" fill="none"/><path d="M2 10L11 3" stroke="#aaa" stroke-width="1"/></svg>
<div class="t" style="left:885px;top:980px">Graph Editor</div>

<!-- TIMELINE -->
<div class="a" style="left:966px;top:630px;width:948px;height:332px;background:#282828"></div>
<div class="a" style="left:966px;top:630px;width:21px;height:332px;background:#1e1e1e"></div>
<div class="a" style="left:966px;top:630px;width:948px;height:24px;background:#212121"></div>
<div class="a" style="left:987px;top:654px;width:905px;height:17px;background:#474747"></div>
<div class="a" style="left:982px;top:653px;width:5px;height:18px;background:#6cc7a8;border-radius:1px"></div>
<div class="a" style="left:1892px;top:653px;width:5px;height:18px;background:#6cc7a8;border-radius:1px"></div>
<div class="a" style="left:1892px;top:672px;width:22px;height:290px;background:#1e1e1e"></div>
<svg style="left:966px;top:630px" width="948" height="24" viewBox="0 0 948 24"><path d="M19.5 14V24" stroke="#999" stroke-width="1"/><path d="M30.4 19V24" stroke="#777" stroke-width="1"/><path d="M41.3 19V24" stroke="#777" stroke-width="1"/><path d="M52.1 19V24" stroke="#777" stroke-width="1"/><path d="M63.0 19V24" stroke="#777" stroke-width="1"/><path d="M73.9 14V24" stroke="#999" stroke-width="1"/><path d="M84.8 19V24" stroke="#777" stroke-width="1"/><path d="M95.7 19V24" stroke="#777" stroke-width="1"/><path d="M106.5 19V24" stroke="#777" stroke-width="1"/><path d="M117.4 19V24" stroke="#777" stroke-width="1"/><path d="M128.3 14V24" stroke="#999" stroke-width="1"/><path d="M139.2 19V24" stroke="#777" stroke-width="1"/><path d="M150.1 19V24" stroke="#777" stroke-width="1"/><path d="M160.9 19V24" stroke="#777" stroke-width="1"/><path d="M171.8 19V24" stroke="#777" stroke-width="1"/><path d="M182.7 14V24" stroke="#999" stroke-width="1"/><path d="M193.6 19V24" stroke="#777" stroke-width="1"/><path d="M204.5 19V24" stroke="#777" stroke-width="1"/><path d="M215.3 19V24" stroke="#777" stroke-width="1"/><path d="M226.2 19V24" stroke="#777" stroke-width="1"/><path d="M237.1 14V24" stroke="#999" stroke-width="1"/><path d="M248.0 19V24" stroke="#777" stroke-width="1"/><path d="M258.9 19V24" stroke="#777" stroke-width="1"/><path d="M269.7 19V24" stroke="#777" stroke-width="1"/><path d="M280.6 19V24" stroke="#777" stroke-width="1"/><path d="M291.5 14V24" stroke="#999" stroke-width="1"/><path d="M302.4 19V24" stroke="#777" stroke-width="1"/><path d="M313.3 19V24" stroke="#777" stroke-width="1"/><path d="M324.1 19V24" stroke="#777" stroke-width="1"/><path d="M335.0 19V24" stroke="#777" stroke-width="1"/><path d="M345.9 14V24" stroke="#999" stroke-width="1"/><path d="M356.8 19V24" stroke="#777" stroke-width="1"/><path d="M367.7 19V24" stroke="#777" stroke-width="1"/><path d="M378.5 19V24" stroke="#777" stroke-width="1"/><path d="M389.4 19V24" stroke="#777" stroke-width="1"/><path d="M400.3 14V24" stroke="#999" stroke-width="1"/><path d="M411.2 19V24" stroke="#777" stroke-width="1"/><path d="M422.1 19V24" stroke="#777" stroke-width="1"/><path d="M432.9 19V24" stroke="#777" stroke-width="1"/><path d="M443.8 19V24" stroke="#777" stroke-width="1"/><path d="M454.7 14V24" stroke="#999" stroke-width="1"/><path d="M465.6 19V24" stroke="#777" stroke-width="1"/><path d="M476.5 19V24" stroke="#777" stroke-width="1"/><path d="M487.3 19V24" stroke="#777" stroke-width="1"/><path d="M498.2 19V24" stroke="#777" stroke-width="1"/><path d="M509.1 14V24" stroke="#999" stroke-width="1"/><path d="M520.0 19V24" stroke="#777" stroke-width="1"/><path d="M530.9 19V24" stroke="#777" stroke-width="1"/><path d="M541.7 19V24" stroke="#777" stroke-width="1"/><path d="M552.6 19V24" stroke="#777" stroke-width="1"/><path d="M563.5 14V24" stroke="#999" stroke-width="1"/><path d="M574.4 19V24" stroke="#777" stroke-width="1"/><path d="M585.3 19V24" stroke="#777" stroke-width="1"/><path d="M596.1 19V24" stroke="#777" stroke-width="1"/><path d="M607.0 19V24" stroke="#777" stroke-width="1"/><path d="M617.9 14V24" stroke="#999" stroke-width="1"/><path d="M628.8 19V24" stroke="#777" stroke-width="1"/><path d="M639.7 19V24" stroke="#777" stroke-width="1"/><path d="M650.5 19V24" stroke="#777" stroke-width="1"/><path d="M661.4 19V24" stroke="#777" stroke-width="1"/><path d="M672.3 14V24" stroke="#999" stroke-width="1"/><path d="M683.2 19V24" stroke="#777" stroke-width="1"/><path d="M694.1 19V24" stroke="#777" stroke-width="1"/><path d="M704.9 19V24" stroke="#777" stroke-width="1"/><path d="M715.8 19V24" stroke="#777" stroke-width="1"/><path d="M726.7 14V24" stroke="#999" stroke-width="1"/><path d="M737.6 19V24" stroke="#777" stroke-width="1"/><path d="M748.5 19V24" stroke="#777" stroke-width="1"/><path d="M759.3 19V24" stroke="#777" stroke-width="1"/><path d="M770.2 19V24" stroke="#777" stroke-width="1"/><path d="M781.1 14V24" stroke="#999" stroke-width="1"/><path d="M792.0 19V24" stroke="#777" stroke-width="1"/><path d="M802.9 19V24" stroke="#777" stroke-width="1"/><path d="M813.7 19V24" stroke="#777" stroke-width="1"/><path d="M824.6 19V24" stroke="#777" stroke-width="1"/><path d="M835.5 14V24" stroke="#999" stroke-width="1"/><path d="M846.4 19V24" stroke="#777" stroke-width="1"/><path d="M857.3 19V24" stroke="#777" stroke-width="1"/><path d="M868.1 19V24" stroke="#777" stroke-width="1"/><path d="M879.0 19V24" stroke="#777" stroke-width="1"/><path d="M889.9 14V24" stroke="#999" stroke-width="1"/><path d="M900.8 19V24" stroke="#777" stroke-width="1"/><path d="M911.7 19V24" stroke="#777" stroke-width="1"/><path d="M922.5 19V24" stroke="#777" stroke-width="1"/><path d="M933.4 19V24" stroke="#777" stroke-width="1"/><path d="M944.3 14V24" stroke="#999" stroke-width="1"/></svg>
<div class="t" style="left:945.0px;width:80px;text-align:center;top:631px;color:#d8d8d8">0</div>
<div class="t" style="left:999.4px;width:80px;text-align:center;top:631px;color:#d8d8d8">15</div>
<div class="t" style="left:1053.8px;width:80px;text-align:center;top:631px;color:#d8d8d8">30</div>
<div class="t" style="left:1108.2px;width:80px;text-align:center;top:631px;color:#d8d8d8">45</div>
<div class="t" style="left:1162.6px;width:80px;text-align:center;top:631px;color:#d8d8d8">60</div>
<div class="t" style="left:1217.0px;width:80px;text-align:center;top:631px;color:#d8d8d8">75</div>
<div class="t" style="left:1271.4px;width:80px;text-align:center;top:631px;color:#d8d8d8">90</div>
<div class="t" style="left:1325.8px;width:80px;text-align:center;top:631px;color:#d8d8d8">105</div>
<div class="t" style="left:1380.2px;width:80px;text-align:center;top:631px;color:#d8d8d8">120</div>
<div class="t" style="left:1434.6px;width:80px;text-align:center;top:631px;color:#d8d8d8">135</div>
<div class="t" style="left:1489.0px;width:80px;text-align:center;top:631px;color:#d8d8d8">150</div>
<div class="t" style="left:1543.4px;width:80px;text-align:center;top:631px;color:#d8d8d8">165</div>
<div class="t" style="left:1597.8px;width:80px;text-align:center;top:631px;color:#d8d8d8">180</div>
<div class="t" style="left:1652.2px;width:80px;text-align:center;top:631px;color:#d8d8d8">195</div>
<div class="t" style="left:1706.6px;width:80px;text-align:center;top:631px;color:#d8d8d8">210</div>
<div class="t" style="left:1761.0px;width:80px;text-align:center;top:631px;color:#d8d8d8">225</div>
<div class="t" style="left:1815.4px;width:80px;text-align:center;top:631px;color:#d8d8d8">240</div>
<div class="a" style="left:1890px;top:631px;width:24px;height:16px;overflow:hidden"><div class="t" style="left:10px;top:0;color:#555">255</div></div>
<div class="a" style="left:987px;top:674px;width:905px;height:18px;background:repeating-linear-gradient(135deg,#8affb5 0px,#74e49a 1.5px,#74e49a 11.5px,#8affb5 12.35px,#66cf8c 13.85px,#66cf8c 24.7px) 7px 0;border-radius:2px;"></div>
<div class="t" style="left:995px;top:675px;color:#222">Color Array</div>
<div class="a" style="left:987px;top:696px;width:905px;height:18px;background:repeating-linear-gradient(135deg,#e8ff90 0px,#cef07e 1.5px,#cef07e 11.5px,#e8ff90 12.35px,#b8db72 13.85px,#b8db72 24.7px) 7px 0;border-radius:2px;"></div>
<div class="t" style="left:995px;top:697px;color:#222">Random [Index]</div>
<div class="a" style="left:987px;top:718px;width:905px;height:18px;background:repeating-linear-gradient(135deg,#e8ff90 0px,#cef07e 1.5px,#cef07e 11.5px,#e8ff90 12.35px,#b8db72 13.85px,#b8db72 24.7px) 7px 0;border-radius:2px;"></div>
<div class="t" style="left:995px;top:719px;color:#222">Oscillator [Position.Z] Cosine</div>
<div class="a" style="left:987px;top:740px;width:905px;height:18px;background:repeating-linear-gradient(135deg,#e8ff90 0px,#cef07e 1.5px,#cef07e 11.5px,#e8ff90 12.35px,#b8db72 13.85px,#b8db72 24.7px) 7px 0;border-radius:2px;"></div>
<div class="t" style="left:995px;top:741px;color:#222">Oscillator [Position.X] Sine</div>
<div class="a" style="left:987px;top:762px;width:905px;height:18px;background:radial-gradient(circle,#dccd6e 0.7px,transparent 1.1px) 0 0/3px 3px,#f6ea8a;border-radius:2px;box-shadow:inset 0 0 0 1px #ffffff;border-radius:3px;"></div>
<div class="t" style="left:995px;top:763px;color:#222">Ellipse Shape</div>
<div class="a" style="left:987px;top:784px;width:905px;height:18px;background:repeating-linear-gradient(135deg,#80b0ff 0px,#6a9ae8 1.5px,#6a9ae8 11.5px,#80b0ff 12.35px,#5a85d6 13.85px,#5a85d6 24.7px) 7px 0;border-radius:2px;"></div>
<div class="t" style="left:995px;top:785px;color:#fff">String Generator [String]</div>
<div class="a" style="left:987px;top:806px;width:905px;height:18px;background:#b88cf5;border-radius:2px;"></div>
<div class="t" style="left:995px;top:807px;color:#fff">Cavalry</div>

<svg style="left:1257px;top:643px" width="17" height="10" viewBox="0 0 17 10"><path d="M0.5 0.5H16.5L8.5 9.5z" fill="#6cc7a8"/></svg>
<div class="a" style="left:1265px;top:650px;width:1px;height:312px;background:#6cc7a8"></div>
<svg style="left:960px;top:807px" width="4" height="18" viewBox="0 0 4 18"><g fill="#888"><rect x="0" y="0" width="1" height="1"/><rect x="0" y="3" width="1" height="1"/><rect x="0" y="6" width="1" height="1"/><rect x="0" y="9" width="1" height="1"/><rect x="0" y="12" width="1" height="1"/><rect x="0" y="15" width="1" height="1"/><rect x="2" y="0" width="1" height="1"/><rect x="2" y="3" width="1" height="1"/><rect x="2" y="6" width="1" height="1"/><rect x="2" y="9" width="1" height="1"/><rect x="2" y="12" width="1" height="1"/><rect x="2" y="15" width="1" height="1"/></g></svg>

<!-- timeline bottom -->
<div class="a" style="left:966px;top:962px;width:948px;height:14px;background:#282828"></div>
<div class="a" style="left:967px;top:964px;width:946px;height:10px;background:#4a4a4a;border-radius:5px"></div>
<div class="a" style="left:966px;top:976px;width:948px;height:22px;background:#474747"></div>
<div class="btn" style="left:970px;top:978px;width:17px;height:18px;border-radius:4px"></div>
<svg style="left:972px;top:982px" width="13" height="10" viewBox="0 0 13 10"><path d="M0 1H13M3 5H6M8 5H13M0 9H3M5 9H8" stroke="#ddd" stroke-width="1.3"/></svg>
<div class="inp" style="left:990px;top:979px;width:150px;height:16px;background:#2c2c2c"></div>
<div class="t" style="left:992px;top:980px">Default Keyframe Layer</div>
<div class="inp" style="left:1146px;top:979px;width:70px;height:16px;background:#2c2c2c"></div>
<div class="t" style="left:1151px;top:979px;color:#555">F</div>
<div class="t" style="left:1163px;top:979px">-</div>
<div class="t" style="left:1222px;top:980px">Align:</div>
<div class="a" style="left:1259px;top:978px;width:52px;height:18px;background:#2a2a2a;border-radius:3px"></div>
<svg style="left:1261px;top:980px" width="48" height="14" viewBox="0 0 48 14"><g stroke="#ddd" stroke-width="1.1" fill="none"><path d="M1.5 1V13M5 4H7M9 4H11M5 10H14"/><path d="M24 1V13M19 4H21M27 4H29M19 10H29"/><path d="M46.5 1V13M35 4H37M40 4H43M33 10H43"/></g><g fill="#5fcf9a"><circle cx="5" cy="4" r="1"/><circle cx="24" cy="7" r="1"/><circle cx="43" cy="4" r="1"/></g></svg>
<div class="btn" style="left:1315px;top:978px;width:18px;height:18px;border-radius:4px"></div>
<svg style="left:1318px;top:981px" width="12" height="12" viewBox="0 0 12 12"><rect x="1" y="1" width="10" height="10" fill="none" stroke="#ccc" stroke-width="1" stroke-dasharray="2 1"/><circle cx="6" cy="6" r="1.2" fill="#ccc"/></svg>
<div class="a" style="left:1336px;top:978px;width:32px;height:18px;background:#2a2a2a;border-radius:3px"></div>
<svg style="left:1339px;top:980px" width="26" height="13" viewBox="0 0 26 13"><path d="M2 11 V6 A5 5 0 0 1 12 6 V8" fill="none" stroke="#ccc" stroke-width="1.8"/><path d="M16 0V13" stroke="#444" stroke-width="1"/><path d="M19 3.5L24 6.5L19 9.5z" fill="none" stroke="#888" stroke-width="1"/></svg>
<div class="a" style="left:1371px;top:978px;width:32px;height:18px;background:#2a2a2a;border-radius:3px"></div>
<svg style="left:1373px;top:980px" width="28" height="13" viewBox="0 0 28 13"><path d="M0 6.5H4M12 6.5H15M6 3V10M9 1V12" stroke="#ccc" stroke-width="1"/><path d="M17 0V13" stroke="#444" stroke-width="1"/><path d="M21 3.5L26 6.5L21 9.5z" fill="none" stroke="#888" stroke-width="1"/></svg>
<svg style="left:1743px;top:980px" width="14" height="14" viewBox="0 0 14 14"><circle cx="6" cy="6" r="5" fill="none" stroke="#ccc" stroke-width="1"/><path d="M3.5 6H8.5" stroke="#ccc" stroke-width="1"/><path d="M10 10L13 13" stroke="#ccc" stroke-width="1.5"/></svg>
<div class="a" style="left:1770px;top:985px;width:112px;height:4px;background:#3a3a3a;border-radius:2px"></div>
<div class="a" style="left:1762px;top:982px;width:10px;height:10px;background:#5fbfa3;border-radius:50%;border:2px solid #49a88a"></div>
<svg style="left:1887px;top:980px" width="14" height="14" viewBox="0 0 14 14"><circle cx="6" cy="6" r="5" fill="none" stroke="#ccc" stroke-width="1"/><path d="M3.5 6H8.5M6 3.5V8.5" stroke="#ccc" stroke-width="1"/><path d="M10 10L13 13" stroke="#ccc" stroke-width="1.5"/></svg>

<!-- STATUS BAR -->
<svg style="left:498px;top:1009px" width="3" height="12" viewBox="0 0 3 12"><circle cx="1.5" cy="1.5" r="1" fill="#888"/><circle cx="1.5" cy="6" r="1" fill="#888"/><circle cx="1.5" cy="10.5" r="1" fill="#888"/></svg>
<div class="btn" style="left:507px;top:1007px;width:17px;height:18px;border-radius:4px"></div>
<svg style="left:510px;top:1010px" width="12" height="12" viewBox="0 0 12 12"><path d="M0.5 0.5H11.5V8.5H6L3 11V8.5H0.5z" fill="#ddd"/><path d="M2.5 3H9.5M2.5 5H9.5M2.5 7H7" stroke="#444" stroke-width="0.9"/></svg>
<div class="a" style="left:528px;top:1008px;width:18px;height:14px;background:#2ecc71;border-radius:2px"></div>
<div class="t" style="left:533px;top:1007px;color:#1d3d2a;font-size:11px">1</div>
<div class="a" style="left:554px;top:1012px;width:6px;height:6px;background:#2ecc71;border-radius:50%"></div>
<div class="t" style="left:565px;top:1008px">Undo (Duplicator)</div>
<div class="t" style="left:1404px;width:200px;text-align:right;top:1008px;font-style:italic;color:#e0e0e0;letter-spacing:-0.3px">Click to see next message</div>
<div class="a" style="left:1610px;top:1006px;width:80px;height:18px;background:#d6c47c;border-radius:2px"></div>
<div class="t" style="left:1615px;top:1008px;color:#2a2a2a">Feedback</div>
<div class="a" style="left:1672px;top:1008px;width:12px;height:14px;background:#f4f4f4;border:1px solid #4c4"></div>
<svg style="left:1674px;top:1010px" width="10" height="10" viewBox="0 0 10 10"><path d="M1 9 L8 2" stroke="#f07030" stroke-width="2.5"/></svg>
<div class="a" style="left:1693px;top:1006px;width:109px;height:18px;background:#2ecc71;border-radius:2px"></div>
<div class="t" style="left:1698px;top:1008px;color:#1a1a1a">Upgrade to Pro</div>
<div class="a" style="left:1783px;top:1011px;width:13px;height:9px;background:#f5c518;border-radius:3px"></div>
<div class="a" style="left:1805px;top:1006px;width:106px;height:18px;background:#3aaaf0;border-radius:2px"></div>
<div class="t" style="left:1810px;top:1008px;color:#1a1a1a">Tips and Tricks</div>
<svg style="left:1890px;top:1008px" width="14" height="14" viewBox="0 0 14 14"><path d="M13 1 C8 1 5 4 4 8 L6 10 C10 9 13 6 13 1z" fill="#e8e8e8"/><circle cx="9" cy="5" r="1.3" fill="#3aaaf0"/><path d="M4 8 L1 9 L3 11 M6 10 L5 13 L3 11" fill="#f05a28"/></svg>



<!-- BLUE CONNECTION CURVE -->
<svg style="left:0;top:0;z-index:50" width="1920" height="1029" viewBox="0 0 1920 1029"><path d="M232 393 C582 393 586 683 936 683" fill="none" stroke="#2d9fe0" stroke-width="1.3"/><circle cx="232" cy="392.5" r="4" fill="#45a8f5" opacity="0.6"/></svg>
</body></html>
